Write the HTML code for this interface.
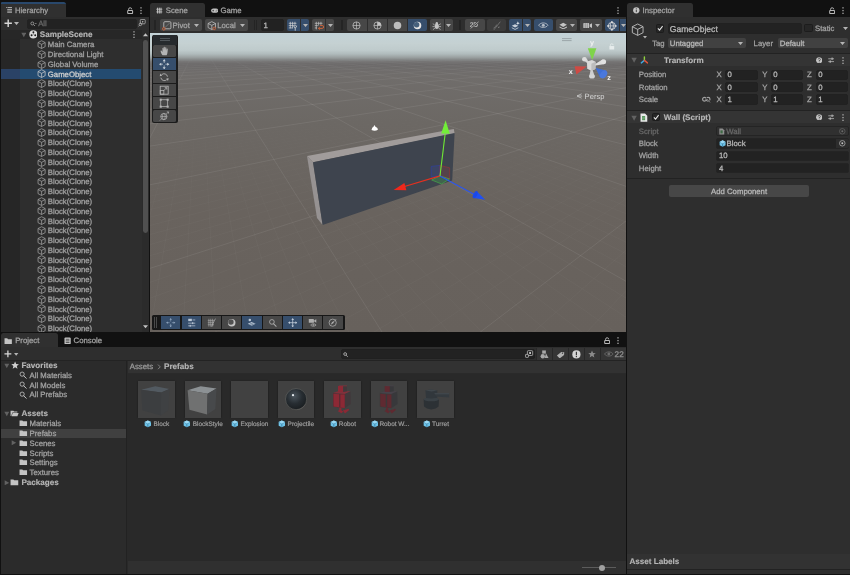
<!DOCTYPE html>
<html lang="en"><head><meta charset="utf-8"><title>Unity Editor</title>
<style>
html,body{margin:0;padding:0;background:#111111;}
body{width:850px;height:575px;overflow:hidden;position:relative;font-family:"Liberation Sans",sans-serif;}
#root{position:absolute;left:0;top:0;width:850px;height:575px;overflow:hidden;background:#111111;will-change:transform;transform:translateZ(0);-webkit-font-smoothing:antialiased;text-rendering:geometricPrecision;}
#root div,#root span,#root svg{position:absolute;box-sizing:border-box;}
#root span{white-space:nowrap;line-height:12px;height:12px;font-size:7.75px;color:#a2a2a2;-webkit-text-stroke:0.28px #a2a2a2;}
#root span.b{font-weight:bold;font-size:8.1px;color:#b6b6b6;-webkit-text-stroke:0.15px #b6b6b6;}
#root span.d{color:#686868;-webkit-text-stroke-color:#686868;}
#root span.s{font-size:6.45px;color:#9c9c9c;-webkit-text-stroke:0.2px #9c9c9c;}
#root span.f{color:#b8b8b8;-webkit-text-stroke-color:#b8b8b8;}
</style></head><body><div id="root">

<div style="left:1.00px;top:17.00px;width:148.00px;height:314.70px;background:#2e2e2e;"></div>
<div style="left:0.00px;top:2.00px;width:66.00px;height:15.20px;background:#303030;border-radius:2.5px 2.5px 0 0;border-top:2px solid #29486c;"></div>
<svg style="left:5.60px;top:6.60px;" width="6.80" height="6.40" viewBox="0 0 10 10"><g fill="#c4c4c4"><rect x="0" y="0.3" width="2" height="1.3"/><rect x="2.8" y="0.3" width="7" height="1.3"/><rect x="1.6" y="3" width="8.2" height="1.3"/><rect x="1.6" y="5.7" width="8.2" height="1.3"/><rect x="1.6" y="8.4" width="8.2" height="1.3"/></g></svg>
<span class="t" style="left:15.00px;top:5.05px;">Hierarchy</span>
<svg style="left:127.40px;top:6.60px;" width="6.20" height="7.00" viewBox="0 0 6.2 7"><rect x="0.7" y="3.4" width="4.9" height="3.1" rx="0.6" fill="none" stroke="#b8b8b8" stroke-width="1.05"/><path d="M1.6 3.3 V2.3 A1.55 1.55 0 0 1 4.7 2.3" fill="none" stroke="#b8b8b8" stroke-width="0.95"/></svg>
<svg style="left:139.60px;top:6.60px;" width="2.00" height="7.20" viewBox="0 0 2 7.2"><g fill="#c4c4c4"><rect x="0.45" y="0.2" width="1.1" height="1.3"/><rect x="0.45" y="2.95" width="1.1" height="1.3"/><rect x="0.45" y="5.7" width="1.1" height="1.3"/></g></svg>
<svg style="left:3.60px;top:19.20px;" width="8.40" height="8.40" viewBox="0 0 10 10"><path d="M5 0.6 V9.4 M0.6 5 H9.4" stroke="#d8d8d8" stroke-width="1.7"/></svg>
<svg style="left:14.20px;top:22.05px;" width="5.00" height="3.10" viewBox="0 0 10 6"><path d="M0 0 H10 L5 6 Z" fill="#b4b4b4"/></svg>
<div style="left:26.80px;top:18.60px;width:110.00px;height:10.00px;background:#222222;border-radius:2px;border:0.6px solid #222;"></div>
<svg style="left:29.60px;top:20.60px;" width="7.00" height="6.00" viewBox="0 0 9 7"><circle cx="3" cy="2.8" r="1.9" fill="none" stroke="#a0a0a0" stroke-width="1.1"/><path d="M4.4 4.2 L6.4 6" stroke="#a0a0a0" stroke-width="1.1"/><path d="M6.2 2.2 h2.6 l-1.3 1.4z" fill="#a0a0a0"/></svg>
<span class="d" style="left:38.20px;top:18.25px;">All</span>
<svg style="left:137.60px;top:19.40px;" width="8.00" height="8.00" viewBox="0 0 14 14"><rect x="4" y="0.8" width="8.6" height="7.6" rx="1.4" fill="none" stroke="#c4c4c4" stroke-width="1.2"/><path d="M7.2 3 V6.4 L10 4.7 Z" fill="#c4c4c4"/><circle cx="4.2" cy="9.4" r="2.2" fill="none" stroke="#c4c4c4" stroke-width="1.2"/><path d="M2.6 11 L0.8 13" stroke="#c4c4c4" stroke-width="1.3"/></svg>
<div style="left:1.00px;top:29.60px;width:18.60px;height:302.10px;background:#262626;"></div>
<div style="left:1.00px;top:29.60px;width:140.60px;height:9.20px;background:#272727;"></div>
<svg style="left:20.70px;top:32.30px;" width="5.60" height="5.60" viewBox="0 0 10 10"><path d="M0.6 1.2 H9.4 L5 9.2 Z" fill="#626262"/></svg>
<svg style="left:28.50px;top:30.40px;" width="8.80" height="8.80" viewBox="0 0 16 16"><circle cx="8" cy="8" r="7.4" fill="#dcdcdc"/><ellipse cx="8" cy="4.3" rx="1.7" ry="1.9" fill="#1e1e1e"/><circle cx="4.7" cy="9.6" r="1.75" fill="#1e1e1e"/><circle cx="11.3" cy="9.6" r="1.75" fill="#1e1e1e"/><path d="M8 7.6 V6.4 M8 7.6 L6.8 8.4 M8 7.6 L9.2 8.4" stroke="#555" stroke-width="0.8"/></svg>
<span class="b" style="left:39.80px;top:29.15px;">SampleScene</span>
<svg style="left:132.60px;top:31.00px;" width="2.00" height="7.20" viewBox="0 0 2 7.2"><g fill="#c4c4c4"><rect x="0.45" y="0.2" width="1.1" height="1.3"/><rect x="0.45" y="2.95" width="1.1" height="1.3"/><rect x="0.45" y="5.7" width="1.1" height="1.3"/></g></svg>
<div style="left:1px;top:39.2px;width:141px;height:292.5px;overflow:hidden;">
<svg style="left:35.9px;top:0.85px" width="9.2" height="9.2" viewBox="0 0 16 16"><g fill="none" stroke="#a8a8a8" stroke-width="1.25" stroke-linejoin="round"><path d="M8 1.3 L14.2 4.4 V11.6 L8 14.7 L1.8 11.6 V4.4 Z"/><path d="M1.8 4.4 L8 7.6 L14.2 4.4 M8 7.6 V14.7"/></g></svg>
<span class="t" style="left:46.8px;top:0.10px;color:#a2a2a2;-webkit-text-stroke-color:#a2a2a2">Main Camera</span>
<svg style="left:35.9px;top:10.64px" width="9.2" height="9.2" viewBox="0 0 16 16"><g fill="none" stroke="#a8a8a8" stroke-width="1.25" stroke-linejoin="round"><path d="M8 1.3 L14.2 4.4 V11.6 L8 14.7 L1.8 11.6 V4.4 Z"/><path d="M1.8 4.4 L8 7.6 L14.2 4.4 M8 7.6 V14.7"/></g></svg>
<span class="t" style="left:46.8px;top:9.89px;color:#a2a2a2;-webkit-text-stroke-color:#a2a2a2">Directional Light</span>
<svg style="left:35.9px;top:20.43px" width="9.2" height="9.2" viewBox="0 0 16 16"><g fill="none" stroke="#a8a8a8" stroke-width="1.25" stroke-linejoin="round"><path d="M8 1.3 L14.2 4.4 V11.6 L8 14.7 L1.8 11.6 V4.4 Z"/><path d="M1.8 4.4 L8 7.6 L14.2 4.4 M8 7.6 V14.7"/></g></svg>
<span class="t" style="left:46.8px;top:19.68px;color:#a2a2a2;-webkit-text-stroke-color:#a2a2a2">Global Volume</span>
<div style="left:0;top:29.92px;width:140.4px;height:9.8px;background:#244b70;"></div><div style="left:0;top:29.92px;width:18.6px;height:9.8px;background:#2a4266;"></div>
<svg style="left:35.9px;top:30.22px" width="9.2" height="9.2" viewBox="0 0 16 16"><g fill="none" stroke="#d0d0d0" stroke-width="1.25" stroke-linejoin="round"><path d="M8 1.3 L14.2 4.4 V11.6 L8 14.7 L1.8 11.6 V4.4 Z"/><path d="M1.8 4.4 L8 7.6 L14.2 4.4 M8 7.6 V14.7"/></g></svg>
<span class="t" style="left:46.8px;top:29.47px;color:#cfcfcf;-webkit-text-stroke-color:#cfcfcf">GameObject</span>
<svg style="left:35.9px;top:40.01px" width="9.2" height="9.2" viewBox="0 0 16 16"><g fill="none" stroke="#a8a8a8" stroke-width="1.25" stroke-linejoin="round"><path d="M8 1.3 L14.2 4.4 V11.6 L8 14.7 L1.8 11.6 V4.4 Z"/><path d="M1.8 4.4 L8 7.6 L14.2 4.4 M8 7.6 V14.7"/></g></svg>
<span class="t" style="left:46.8px;top:39.26px;color:#a2a2a2;-webkit-text-stroke-color:#a2a2a2">Block(Clone)</span>
<svg style="left:35.9px;top:49.80px" width="9.2" height="9.2" viewBox="0 0 16 16"><g fill="none" stroke="#a8a8a8" stroke-width="1.25" stroke-linejoin="round"><path d="M8 1.3 L14.2 4.4 V11.6 L8 14.7 L1.8 11.6 V4.4 Z"/><path d="M1.8 4.4 L8 7.6 L14.2 4.4 M8 7.6 V14.7"/></g></svg>
<span class="t" style="left:46.8px;top:49.05px;color:#a2a2a2;-webkit-text-stroke-color:#a2a2a2">Block(Clone)</span>
<svg style="left:35.9px;top:59.59px" width="9.2" height="9.2" viewBox="0 0 16 16"><g fill="none" stroke="#a8a8a8" stroke-width="1.25" stroke-linejoin="round"><path d="M8 1.3 L14.2 4.4 V11.6 L8 14.7 L1.8 11.6 V4.4 Z"/><path d="M1.8 4.4 L8 7.6 L14.2 4.4 M8 7.6 V14.7"/></g></svg>
<span class="t" style="left:46.8px;top:58.84px;color:#a2a2a2;-webkit-text-stroke-color:#a2a2a2">Block(Clone)</span>
<svg style="left:35.9px;top:69.38px" width="9.2" height="9.2" viewBox="0 0 16 16"><g fill="none" stroke="#a8a8a8" stroke-width="1.25" stroke-linejoin="round"><path d="M8 1.3 L14.2 4.4 V11.6 L8 14.7 L1.8 11.6 V4.4 Z"/><path d="M1.8 4.4 L8 7.6 L14.2 4.4 M8 7.6 V14.7"/></g></svg>
<span class="t" style="left:46.8px;top:68.63px;color:#a2a2a2;-webkit-text-stroke-color:#a2a2a2">Block(Clone)</span>
<svg style="left:35.9px;top:79.17px" width="9.2" height="9.2" viewBox="0 0 16 16"><g fill="none" stroke="#a8a8a8" stroke-width="1.25" stroke-linejoin="round"><path d="M8 1.3 L14.2 4.4 V11.6 L8 14.7 L1.8 11.6 V4.4 Z"/><path d="M1.8 4.4 L8 7.6 L14.2 4.4 M8 7.6 V14.7"/></g></svg>
<span class="t" style="left:46.8px;top:78.42px;color:#a2a2a2;-webkit-text-stroke-color:#a2a2a2">Block(Clone)</span>
<svg style="left:35.9px;top:88.96px" width="9.2" height="9.2" viewBox="0 0 16 16"><g fill="none" stroke="#a8a8a8" stroke-width="1.25" stroke-linejoin="round"><path d="M8 1.3 L14.2 4.4 V11.6 L8 14.7 L1.8 11.6 V4.4 Z"/><path d="M1.8 4.4 L8 7.6 L14.2 4.4 M8 7.6 V14.7"/></g></svg>
<span class="t" style="left:46.8px;top:88.21px;color:#a2a2a2;-webkit-text-stroke-color:#a2a2a2">Block(Clone)</span>
<svg style="left:35.9px;top:98.75px" width="9.2" height="9.2" viewBox="0 0 16 16"><g fill="none" stroke="#a8a8a8" stroke-width="1.25" stroke-linejoin="round"><path d="M8 1.3 L14.2 4.4 V11.6 L8 14.7 L1.8 11.6 V4.4 Z"/><path d="M1.8 4.4 L8 7.6 L14.2 4.4 M8 7.6 V14.7"/></g></svg>
<span class="t" style="left:46.8px;top:98.00px;color:#a2a2a2;-webkit-text-stroke-color:#a2a2a2">Block(Clone)</span>
<svg style="left:35.9px;top:108.54px" width="9.2" height="9.2" viewBox="0 0 16 16"><g fill="none" stroke="#a8a8a8" stroke-width="1.25" stroke-linejoin="round"><path d="M8 1.3 L14.2 4.4 V11.6 L8 14.7 L1.8 11.6 V4.4 Z"/><path d="M1.8 4.4 L8 7.6 L14.2 4.4 M8 7.6 V14.7"/></g></svg>
<span class="t" style="left:46.8px;top:107.79px;color:#a2a2a2;-webkit-text-stroke-color:#a2a2a2">Block(Clone)</span>
<svg style="left:35.9px;top:118.33px" width="9.2" height="9.2" viewBox="0 0 16 16"><g fill="none" stroke="#a8a8a8" stroke-width="1.25" stroke-linejoin="round"><path d="M8 1.3 L14.2 4.4 V11.6 L8 14.7 L1.8 11.6 V4.4 Z"/><path d="M1.8 4.4 L8 7.6 L14.2 4.4 M8 7.6 V14.7"/></g></svg>
<span class="t" style="left:46.8px;top:117.58px;color:#a2a2a2;-webkit-text-stroke-color:#a2a2a2">Block(Clone)</span>
<svg style="left:35.9px;top:128.12px" width="9.2" height="9.2" viewBox="0 0 16 16"><g fill="none" stroke="#a8a8a8" stroke-width="1.25" stroke-linejoin="round"><path d="M8 1.3 L14.2 4.4 V11.6 L8 14.7 L1.8 11.6 V4.4 Z"/><path d="M1.8 4.4 L8 7.6 L14.2 4.4 M8 7.6 V14.7"/></g></svg>
<span class="t" style="left:46.8px;top:127.37px;color:#a2a2a2;-webkit-text-stroke-color:#a2a2a2">Block(Clone)</span>
<svg style="left:35.9px;top:137.91px" width="9.2" height="9.2" viewBox="0 0 16 16"><g fill="none" stroke="#a8a8a8" stroke-width="1.25" stroke-linejoin="round"><path d="M8 1.3 L14.2 4.4 V11.6 L8 14.7 L1.8 11.6 V4.4 Z"/><path d="M1.8 4.4 L8 7.6 L14.2 4.4 M8 7.6 V14.7"/></g></svg>
<span class="t" style="left:46.8px;top:137.16px;color:#a2a2a2;-webkit-text-stroke-color:#a2a2a2">Block(Clone)</span>
<svg style="left:35.9px;top:147.70px" width="9.2" height="9.2" viewBox="0 0 16 16"><g fill="none" stroke="#a8a8a8" stroke-width="1.25" stroke-linejoin="round"><path d="M8 1.3 L14.2 4.4 V11.6 L8 14.7 L1.8 11.6 V4.4 Z"/><path d="M1.8 4.4 L8 7.6 L14.2 4.4 M8 7.6 V14.7"/></g></svg>
<span class="t" style="left:46.8px;top:146.95px;color:#a2a2a2;-webkit-text-stroke-color:#a2a2a2">Block(Clone)</span>
<svg style="left:35.9px;top:157.49px" width="9.2" height="9.2" viewBox="0 0 16 16"><g fill="none" stroke="#a8a8a8" stroke-width="1.25" stroke-linejoin="round"><path d="M8 1.3 L14.2 4.4 V11.6 L8 14.7 L1.8 11.6 V4.4 Z"/><path d="M1.8 4.4 L8 7.6 L14.2 4.4 M8 7.6 V14.7"/></g></svg>
<span class="t" style="left:46.8px;top:156.74px;color:#a2a2a2;-webkit-text-stroke-color:#a2a2a2">Block(Clone)</span>
<svg style="left:35.9px;top:167.28px" width="9.2" height="9.2" viewBox="0 0 16 16"><g fill="none" stroke="#a8a8a8" stroke-width="1.25" stroke-linejoin="round"><path d="M8 1.3 L14.2 4.4 V11.6 L8 14.7 L1.8 11.6 V4.4 Z"/><path d="M1.8 4.4 L8 7.6 L14.2 4.4 M8 7.6 V14.7"/></g></svg>
<span class="t" style="left:46.8px;top:166.53px;color:#a2a2a2;-webkit-text-stroke-color:#a2a2a2">Block(Clone)</span>
<svg style="left:35.9px;top:177.07px" width="9.2" height="9.2" viewBox="0 0 16 16"><g fill="none" stroke="#a8a8a8" stroke-width="1.25" stroke-linejoin="round"><path d="M8 1.3 L14.2 4.4 V11.6 L8 14.7 L1.8 11.6 V4.4 Z"/><path d="M1.8 4.4 L8 7.6 L14.2 4.4 M8 7.6 V14.7"/></g></svg>
<span class="t" style="left:46.8px;top:176.32px;color:#a2a2a2;-webkit-text-stroke-color:#a2a2a2">Block(Clone)</span>
<svg style="left:35.9px;top:186.86px" width="9.2" height="9.2" viewBox="0 0 16 16"><g fill="none" stroke="#a8a8a8" stroke-width="1.25" stroke-linejoin="round"><path d="M8 1.3 L14.2 4.4 V11.6 L8 14.7 L1.8 11.6 V4.4 Z"/><path d="M1.8 4.4 L8 7.6 L14.2 4.4 M8 7.6 V14.7"/></g></svg>
<span class="t" style="left:46.8px;top:186.11px;color:#a2a2a2;-webkit-text-stroke-color:#a2a2a2">Block(Clone)</span>
<svg style="left:35.9px;top:196.65px" width="9.2" height="9.2" viewBox="0 0 16 16"><g fill="none" stroke="#a8a8a8" stroke-width="1.25" stroke-linejoin="round"><path d="M8 1.3 L14.2 4.4 V11.6 L8 14.7 L1.8 11.6 V4.4 Z"/><path d="M1.8 4.4 L8 7.6 L14.2 4.4 M8 7.6 V14.7"/></g></svg>
<span class="t" style="left:46.8px;top:195.90px;color:#a2a2a2;-webkit-text-stroke-color:#a2a2a2">Block(Clone)</span>
<svg style="left:35.9px;top:206.44px" width="9.2" height="9.2" viewBox="0 0 16 16"><g fill="none" stroke="#a8a8a8" stroke-width="1.25" stroke-linejoin="round"><path d="M8 1.3 L14.2 4.4 V11.6 L8 14.7 L1.8 11.6 V4.4 Z"/><path d="M1.8 4.4 L8 7.6 L14.2 4.4 M8 7.6 V14.7"/></g></svg>
<span class="t" style="left:46.8px;top:205.69px;color:#a2a2a2;-webkit-text-stroke-color:#a2a2a2">Block(Clone)</span>
<svg style="left:35.9px;top:216.23px" width="9.2" height="9.2" viewBox="0 0 16 16"><g fill="none" stroke="#a8a8a8" stroke-width="1.25" stroke-linejoin="round"><path d="M8 1.3 L14.2 4.4 V11.6 L8 14.7 L1.8 11.6 V4.4 Z"/><path d="M1.8 4.4 L8 7.6 L14.2 4.4 M8 7.6 V14.7"/></g></svg>
<span class="t" style="left:46.8px;top:215.48px;color:#a2a2a2;-webkit-text-stroke-color:#a2a2a2">Block(Clone)</span>
<svg style="left:35.9px;top:226.02px" width="9.2" height="9.2" viewBox="0 0 16 16"><g fill="none" stroke="#a8a8a8" stroke-width="1.25" stroke-linejoin="round"><path d="M8 1.3 L14.2 4.4 V11.6 L8 14.7 L1.8 11.6 V4.4 Z"/><path d="M1.8 4.4 L8 7.6 L14.2 4.4 M8 7.6 V14.7"/></g></svg>
<span class="t" style="left:46.8px;top:225.27px;color:#a2a2a2;-webkit-text-stroke-color:#a2a2a2">Block(Clone)</span>
<svg style="left:35.9px;top:235.81px" width="9.2" height="9.2" viewBox="0 0 16 16"><g fill="none" stroke="#a8a8a8" stroke-width="1.25" stroke-linejoin="round"><path d="M8 1.3 L14.2 4.4 V11.6 L8 14.7 L1.8 11.6 V4.4 Z"/><path d="M1.8 4.4 L8 7.6 L14.2 4.4 M8 7.6 V14.7"/></g></svg>
<span class="t" style="left:46.8px;top:235.06px;color:#a2a2a2;-webkit-text-stroke-color:#a2a2a2">Block(Clone)</span>
<svg style="left:35.9px;top:245.60px" width="9.2" height="9.2" viewBox="0 0 16 16"><g fill="none" stroke="#a8a8a8" stroke-width="1.25" stroke-linejoin="round"><path d="M8 1.3 L14.2 4.4 V11.6 L8 14.7 L1.8 11.6 V4.4 Z"/><path d="M1.8 4.4 L8 7.6 L14.2 4.4 M8 7.6 V14.7"/></g></svg>
<span class="t" style="left:46.8px;top:244.85px;color:#a2a2a2;-webkit-text-stroke-color:#a2a2a2">Block(Clone)</span>
<svg style="left:35.9px;top:255.39px" width="9.2" height="9.2" viewBox="0 0 16 16"><g fill="none" stroke="#a8a8a8" stroke-width="1.25" stroke-linejoin="round"><path d="M8 1.3 L14.2 4.4 V11.6 L8 14.7 L1.8 11.6 V4.4 Z"/><path d="M1.8 4.4 L8 7.6 L14.2 4.4 M8 7.6 V14.7"/></g></svg>
<span class="t" style="left:46.8px;top:254.64px;color:#a2a2a2;-webkit-text-stroke-color:#a2a2a2">Block(Clone)</span>
<svg style="left:35.9px;top:265.18px" width="9.2" height="9.2" viewBox="0 0 16 16"><g fill="none" stroke="#a8a8a8" stroke-width="1.25" stroke-linejoin="round"><path d="M8 1.3 L14.2 4.4 V11.6 L8 14.7 L1.8 11.6 V4.4 Z"/><path d="M1.8 4.4 L8 7.6 L14.2 4.4 M8 7.6 V14.7"/></g></svg>
<span class="t" style="left:46.8px;top:264.43px;color:#a2a2a2;-webkit-text-stroke-color:#a2a2a2">Block(Clone)</span>
<svg style="left:35.9px;top:274.97px" width="9.2" height="9.2" viewBox="0 0 16 16"><g fill="none" stroke="#a8a8a8" stroke-width="1.25" stroke-linejoin="round"><path d="M8 1.3 L14.2 4.4 V11.6 L8 14.7 L1.8 11.6 V4.4 Z"/><path d="M1.8 4.4 L8 7.6 L14.2 4.4 M8 7.6 V14.7"/></g></svg>
<span class="t" style="left:46.8px;top:274.22px;color:#a2a2a2;-webkit-text-stroke-color:#a2a2a2">Block(Clone)</span>
<svg style="left:35.9px;top:284.76px" width="9.2" height="9.2" viewBox="0 0 16 16"><g fill="none" stroke="#a8a8a8" stroke-width="1.25" stroke-linejoin="round"><path d="M8 1.3 L14.2 4.4 V11.6 L8 14.7 L1.8 11.6 V4.4 Z"/><path d="M1.8 4.4 L8 7.6 L14.2 4.4 M8 7.6 V14.7"/></g></svg>
<span class="t" style="left:46.8px;top:284.01px;color:#a2a2a2;-webkit-text-stroke-color:#a2a2a2">Block(Clone)</span>
</div>
<div style="left:142.00px;top:29.60px;width:7.00px;height:302.10px;background:#2b2b2b;"></div>
<svg style="left:142.60px;top:33.40px;" width="5.00" height="3.40" viewBox="0 0 10 6"><path d="M0 6 H10 L5 0 Z" fill="#c4c4c4"/></svg>
<svg style="left:142.60px;top:325.20px;" width="5.00" height="3.40" viewBox="0 0 10 6"><path d="M0 0 H10 L5 6 Z" fill="#c4c4c4"/></svg>
<div style="left:143.40px;top:40.40px;width:4.80px;height:192.40px;background:#505050;border-radius:2.4px;"></div>
<div style="left:150.00px;top:17.00px;width:476.00px;height:15.60px;background:#2e2e2e;"></div>
<div style="left:150.00px;top:2.50px;width:54.60px;height:14.50px;background:#303030;border-radius:2.5px 2.5px 0 0;"></div>
<svg style="left:156.40px;top:6.60px;" width="6.60" height="7.20" viewBox="0 0 10 10"><path d="M0.4 3 H9.6 M0.4 7 H9.6" stroke="#c4c4c4" stroke-width="1.1"/><path d="M2.4 0.6 V9.4 M5 0.6 V9.4 M7.6 0.6 V9.4" stroke="#c4c4c4" stroke-width="1.5"/></svg>
<span class="t" style="left:165.80px;top:5.05px;">Scene</span>
<svg style="left:210.60px;top:7.80px;" width="7.40" height="5.20" viewBox="0 0 12 8"><rect x="0.2" y="0.4" width="11.6" height="7.2" rx="3.6" fill="#c4c4c4"/><path d="M2.2 4 H5 M3.6 2.6 V5.4" stroke="#222" stroke-width="0.9"/><circle cx="8.2" cy="4.6" r="0.8" fill="#222"/><circle cx="9.8" cy="3.2" r="0.8" fill="#222"/></svg>
<span class="t" style="left:220.40px;top:5.05px;">Game</span>
<svg style="left:617.00px;top:6.60px;" width="2.00" height="7.20" viewBox="0 0 2 7.2"><g fill="#c4c4c4"><rect x="0.45" y="0.2" width="1.1" height="1.3"/><rect x="0.45" y="2.95" width="1.1" height="1.3"/><rect x="0.45" y="5.7" width="1.1" height="1.3"/></g></svg>
<div style="left:153.60px;top:20.00px;width:0.70px;height:10.20px;background:#242424;"></div>
<div style="left:155.20px;top:20.00px;width:0.70px;height:10.20px;background:#242424;"></div>
<div style="left:160.00px;top:19.30px;width:41.80px;height:11.50px;background:#474747;border-radius:2px 2px 2px 2px;"></div>
<div style="left:204.50px;top:19.30px;width:43.50px;height:11.50px;background:#474747;border-radius:2px 2px 2px 2px;"></div>
<svg style="left:162.40px;top:21.00px;" width="9.60" height="9.60" viewBox="0 0 14 14"><rect x="2.6" y="1" width="10.4" height="10.4" rx="1.6" fill="none" stroke="#c4c4c4" stroke-width="1.2"/><path d="M4 10 L11.6 2.4" stroke="#8a8a8a" stroke-width="1"/><circle cx="2.6" cy="11.4" r="1.9" fill="#515151" stroke="#d9663a" stroke-width="1.2"/></svg>
<span class="t" style="left:172.60px;top:19.55px;">Pivot</span>
<svg style="left:194.00px;top:23.85px;" width="5.00" height="3.10" viewBox="0 0 10 6"><path d="M0 0 H10 L5 6 Z" fill="#b4b4b4"/></svg>
<svg style="left:206.60px;top:21.00px;" width="9.60" height="9.60" viewBox="0 0 14 14"><g fill="none" stroke="#c4c4c4" stroke-width="1.1" stroke-linejoin="round"><path d="M7 1 L12.4 3.6 V9.6 L7 12.4 L1.6 9.6 V3.6 Z"/><path d="M1.6 3.6 L7 6.4 L12.4 3.6 M7 6.4 V12.4"/></g><circle cx="10.6" cy="10.8" r="1.9" fill="#515151" stroke="#d9663a" stroke-width="1.2"/></svg>
<span class="t" style="left:217.20px;top:19.55px;">Local</span>
<svg style="left:240.40px;top:23.85px;" width="5.00" height="3.10" viewBox="0 0 10 6"><path d="M0 0 H10 L5 6 Z" fill="#b4b4b4"/></svg>
<div style="left:254.40px;top:20.00px;width:0.70px;height:10.20px;background:#242424;"></div>
<div style="left:256.00px;top:20.00px;width:0.70px;height:10.20px;background:#242424;"></div>
<div style="left:260.60px;top:19.30px;width:23.20px;height:11.50px;background:#222222;border-radius:2px;border:0.6px solid #212121;"></div>
<span class="f" style="left:263.40px;top:19.55px;">1</span>
<div style="left:286.80px;top:19.30px;width:13.20px;height:11.50px;background:#364e6c;border-radius:2px 0px 0px 2px;"></div>
<div style="left:300.70px;top:19.30px;width:8.50px;height:11.50px;background:#364e6c;border-radius:0px 2px 2px 0px;"></div>
<svg style="left:302.70px;top:23.85px;" width="5.00" height="3.10" viewBox="0 0 10 6"><path d="M0 0 H10 L5 6 Z" fill="#b4b4b4"/></svg>
<svg style="left:288.40px;top:20.80px;" width="10.00" height="10.00" viewBox="0 0 13 13"><path d="M3 1 V9.6 M6 1 V9.6 M9 1 V5 M1 3 H11 M1 6 H11 M1 9 H6" stroke="#d8d8d8" stroke-width="0.9" fill="none"/><path d="M7.6 6.6 L9.4 9.6 L11.4 6.4 M9.4 9.6 V12.6" stroke="#d8d8d8" stroke-width="1.1" fill="none"/></svg>
<div style="left:312.00px;top:19.30px;width:13.00px;height:11.50px;background:#474747;border-radius:2px 0px 0px 2px;"></div>
<div style="left:325.70px;top:19.30px;width:8.50px;height:11.50px;background:#474747;border-radius:0px 2px 2px 0px;"></div>
<svg style="left:327.70px;top:23.85px;" width="5.00" height="3.10" viewBox="0 0 10 6"><path d="M0 0 H10 L5 6 Z" fill="#b4b4b4"/></svg>
<svg style="left:313.60px;top:20.80px;" width="10.00" height="10.00" viewBox="0 0 13 13"><path d="M3 1 V11 M6 1 V6 M9 1 V5 M1 3 H11 M1 6 H5 M1 9 H4" stroke="#c4c4c4" stroke-width="0.9" fill="none"/><path d="M6 9.6 H10.6 A1.9 1.9 0 0 0 10.6 5.8 H8" stroke="#d9663a" stroke-width="1.2" fill="none"/><path d="M7.6 8 L5.6 9.6 L7.6 11.2" stroke="#d9663a" stroke-width="1.1" fill="none"/></svg>
<div style="left:340.60px;top:20.00px;width:0.70px;height:10.20px;background:#242424;"></div>
<div style="left:342.20px;top:20.00px;width:0.70px;height:10.20px;background:#242424;"></div>
<div style="left:347.00px;top:19.30px;width:19.90px;height:11.50px;background:#474747;border-radius:2px 0px 0px 2px;"></div>
<div style="left:367.60px;top:19.30px;width:19.40px;height:11.50px;background:#474747;border-radius:0px 0px 0px 0px;"></div>
<div style="left:387.80px;top:19.30px;width:19.60px;height:11.50px;background:#474747;border-radius:0px 0px 0px 0px;"></div>
<div style="left:408.20px;top:19.30px;width:19.30px;height:11.50px;background:#364e6c;border-radius:0px 2px 2px 0px;"></div>
<svg style="left:352.40px;top:21.00px;" width="9.00" height="9.00" viewBox="0 0 12 12"><circle cx="6" cy="6" r="4.8" fill="none" stroke="#c4c4c4" stroke-width="1"/><path d="M6 1.2 V10.8 M1.2 6 H10.8" stroke="#c4c4c4" stroke-width="0.9"/></svg>
<svg style="left:372.80px;top:21.00px;" width="9.00" height="9.00" viewBox="0 0 12 12"><circle cx="6" cy="6" r="4.8" fill="none" stroke="#c4c4c4" stroke-width="1"/><path d="M6 1.2 A4.8 4.8 0 0 1 10.8 6 H6 Z" fill="#c4c4c4"/><path d="M6 1.2 V10.8 M1.2 6 H10.8" stroke="#c4c4c4" stroke-width="0.9"/></svg>
<svg style="left:393.00px;top:21.00px;" width="9.00" height="9.00" viewBox="0 0 12 12"><circle cx="6" cy="6" r="5" fill="#bdbdbd"/></svg>
<svg style="left:413.40px;top:21.00px;" width="9.00" height="9.00" viewBox="0 0 12 12"><circle cx="6" cy="6" r="5" fill="#e6e6e6"/><circle cx="4.8" cy="5" r="3.7" fill="#46607c"/></svg>
<div style="left:429.60px;top:19.30px;width:14.20px;height:11.50px;background:#474747;border-radius:2px 0px 0px 2px;"></div>
<div style="left:444.50px;top:19.30px;width:8.00px;height:11.50px;background:#474747;border-radius:0px 2px 2px 0px;"></div>
<svg style="left:446.20px;top:23.85px;" width="5.00" height="3.10" viewBox="0 0 10 6"><path d="M0 0 H10 L5 6 Z" fill="#b4b4b4"/></svg>
<svg style="left:431.80px;top:20.80px;" width="9.60" height="9.60" viewBox="0 0 12 12"><ellipse cx="6" cy="6.6" rx="2.6" ry="3.4" fill="#c4c4c4"/><circle cx="6" cy="2.8" r="1.5" fill="#c4c4c4"/><path d="M3.4 5 L1 3.4 M3.2 7 H0.6 M3.6 9 L1.2 10.8 M8.6 5 L11 3.4 M8.8 7 H11.4 M8.4 9 L10.8 10.8" stroke="#c4c4c4" stroke-width="0.9"/></svg>
<div style="left:458.60px;top:20.00px;width:0.70px;height:10.20px;background:#242424;"></div>
<div style="left:460.20px;top:20.00px;width:0.70px;height:10.20px;background:#242424;"></div>
<div style="left:465.00px;top:19.30px;width:19.50px;height:11.50px;background:#474747;border-radius:2px 2px 2px 2px;"></div>
<div style="left:486.80px;top:19.30px;width:19.40px;height:11.50px;background:#3c3c3c;border-radius:2px;"></div>
<span class="t" style="left:469.8px;top:20.4px;font-size:6.8px;font-weight:bold;letter-spacing:-0.3px;color:#b4b4b4;-webkit-text-stroke:0;">2D</span>
<svg style="left:469.00px;top:20.40px;" width="12.00" height="9.60" viewBox="0 0 12 9.6"><path d="M1.6 8.4 L9.6 1.8" stroke="#474747" stroke-width="1.9"/><path d="M1.6 8.4 L9.6 1.8" stroke="#b4b4b4" stroke-width="0.8"/></svg>
<svg style="left:491.60px;top:21.00px;" width="10.00" height="9.40" viewBox="0 0 11 11"><path d="M1.4 8.4 L3.8 6.6 L5.2 4.2 M6.8 6.6 l1.4 1.6 m0 -1.6 l-1.4 1.6" stroke="#7a7a7a" stroke-width="0.9" fill="none"/><path d="M1.8 10.4 L9.4 0.8" stroke="#7a7a7a" stroke-width="0.9"/></svg>
<div style="left:509.20px;top:19.30px;width:13.30px;height:11.50px;background:#364e6c;border-radius:2px 0px 0px 2px;"></div>
<div style="left:523.20px;top:19.30px;width:8.20px;height:11.50px;background:#364e6c;border-radius:0px 2px 2px 0px;"></div>
<svg style="left:525.00px;top:23.85px;" width="5.00" height="3.10" viewBox="0 0 10 6"><path d="M0 0 H10 L5 6 Z" fill="#b4b4b4"/></svg>
<svg style="left:511.40px;top:20.80px;" width="9.40" height="9.40" viewBox="0 0 12 12"><path d="M1 6.2 L5.2 4 L9.4 6.2 L5.2 8.4 Z" fill="#c8d0da"/><path d="M1 8.6 L5.2 10.8 L9.4 8.6" fill="none" stroke="#c8d0da" stroke-width="1.1"/><path d="M8.8 0.4 L9.5 2.1 L11.2 2.8 L9.5 3.5 L8.8 5.2 L8.1 3.5 L6.4 2.8 L8.1 2.1 Z" fill="#e8edf2"/></svg>
<div style="left:533.80px;top:19.30px;width:19.40px;height:11.50px;background:#364e6c;border-radius:2px 2px 2px 2px;"></div>
<svg style="left:538.20px;top:22.40px;" width="10.60" height="6.40" viewBox="0 0 13 8"><path d="M0.6 4 C3.4 0.2 9.6 0.2 12.4 4 C9.6 7.8 3.4 7.8 0.6 4 Z" fill="none" stroke="#b4bcc6" stroke-width="1.1"/><circle cx="6.5" cy="4" r="1.9" fill="#b4bcc6"/></svg>
<div style="left:555.80px;top:19.30px;width:21.70px;height:11.50px;background:#474747;border-radius:2px 2px 2px 2px;"></div>
<svg style="left:558.60px;top:21.80px;" width="8.40" height="7.60" viewBox="0 0 10 9"><path d="M0.6 3.4 L5 1 L9.4 3.4 L5 5.8 Z" fill="#c4c4c4"/><path d="M0.6 5.8 L5 8.2 L9.4 5.8" fill="none" stroke="#c4c4c4" stroke-width="1.2"/></svg>
<svg style="left:570.00px;top:23.85px;" width="5.00" height="3.10" viewBox="0 0 10 6"><path d="M0 0 H10 L5 6 Z" fill="#b4b4b4"/></svg>
<div style="left:580.00px;top:19.30px;width:22.00px;height:11.50px;background:#474747;border-radius:2px 2px 2px 2px;"></div>
<svg style="left:582.80px;top:22.00px;" width="9.40" height="7.20" viewBox="0 0 12 8"><rect x="0.4" y="0.8" width="7.4" height="6.4" rx="0.8" fill="#c4c4c4"/><path d="M8.6 2.6 L11.6 0.8 V7.2 L8.6 5.4 Z" fill="#c4c4c4"/><path d="M2.8 0.8 V7.2 M5.4 0.8 V7.2" stroke="#515151" stroke-width="0.6"/></svg>
<svg style="left:594.60px;top:23.85px;" width="5.00" height="3.10" viewBox="0 0 10 6"><path d="M0 0 H10 L5 6 Z" fill="#b4b4b4"/></svg>
<div style="left:605.00px;top:19.30px;width:13.80px;height:11.50px;background:#364e6c;border-radius:2px 0px 0px 2px;"></div>
<div style="left:619.50px;top:19.30px;width:6.50px;height:11.50px;background:#364e6c;border-radius:0px 0px 0px 0px;"></div>
<svg style="left:620.60px;top:23.85px;" width="5.00" height="3.10" viewBox="0 0 10 6"><path d="M0 0 H10 L5 6 Z" fill="#b4b4b4"/></svg>
<svg style="left:607.00px;top:20.80px;" width="9.80" height="9.80" viewBox="0 0 12 12"><circle cx="6" cy="6" r="4.3" fill="none" stroke="#dcdcdc" stroke-width="1.1"/><ellipse cx="6" cy="6" rx="1.9" ry="4.3" fill="none" stroke="#dcdcdc" stroke-width="0.9"/><path d="M1.7 6 H10.3" stroke="#dcdcdc" stroke-width="0.9"/><circle cx="6" cy="1.2" r="1.1" fill="#dcdcdc"/><circle cx="6" cy="10.8" r="1.1" fill="#dcdcdc"/><circle cx="1.2" cy="6" r="1.1" fill="#dcdcdc"/><circle cx="10.8" cy="6" r="1.1" fill="#dcdcdc"/></svg>
<svg style="left:150.00px;top:32.60px;" width="476.00" height="299.10" viewBox="0 0 476 299.09999999999997"><defs><linearGradient id="sky" gradientUnits="userSpaceOnUse" x1="0" y1="0" x2="0" y2="299.1"><stop offset="0" stop-color="#c2d2d7"/><stop offset="0.034" stop-color="#c5d1d2"/><stop offset="0.057" stop-color="#bfcbcc"/><stop offset="0.070" stop-color="#b0bbbc"/><stop offset="0.082" stop-color="#999f9f"/><stop offset="0.089" stop-color="#858888"/><stop offset="0.096" stop-color="#747373"/><stop offset="0.104" stop-color="#6c6a6a"/><stop offset="0.14" stop-color="#706d6b"/><stop offset="0.30" stop-color="#6c6864"/><stop offset="0.6" stop-color="#69635e"/><stop offset="1" stop-color="#67615c"/></linearGradient><linearGradient id="gmf" gradientUnits="userSpaceOnUse" x1="0" y1="23.4" x2="0" y2="67.4"><stop offset="0" stop-color="#000"/><stop offset="0.25" stop-color="#888"/><stop offset="1" stop-color="#fff"/></linearGradient><mask id="gm" maskUnits="userSpaceOnUse" x="0" y="0" width="476.0" height="299.1"><rect x="0" y="0" width="476.0" height="299.1" fill="url(#gmf)"/></mask><linearGradient id="gnf" gradientUnits="userSpaceOnUse" x1="0" y1="62.4" x2="0" y2="197.4"><stop offset="0" stop-color="#000"/><stop offset="1" stop-color="#fff"/></linearGradient><mask id="gn" maskUnits="userSpaceOnUse" x="0" y="0" width="476.0" height="299.1"><rect x="0" y="0" width="476.0" height="299.1" fill="url(#gnf)"/></mask></defs><rect x="0" y="0" width="476" height="299.09999999999997" fill="url(#sky)"/><path mask="url(#gm)" stroke="#ffffff" stroke-opacity="0.095" stroke-width="0.8" fill="none" d="M-2.0 22.6L8.3 22.4M-2.0 23.2L30.9 22.4M-2.0 23.8L53.8 22.4M-2.0 24.5L76.9 22.4M462.8 22.4L478.0 22.9M-2.0 25.2L100.4 22.4M442.7 22.4L478.0 23.7M-2.0 26.0L124.0 22.4M422.7 22.4L478.0 24.6M-2.0 26.9L148.0 22.4M403.0 22.4L478.0 25.5M-2.0 27.9L172.2 22.4M383.4 22.4L478.0 26.5M-2.0 28.9L196.8 22.4M364.0 22.4L478.0 27.7M-2.0 30.1L221.6 22.4M344.8 22.4L478.0 29.0M-2.0 31.4L246.7 22.4M325.7 22.4L478.0 30.5M-2.0 32.9L272.1 22.4M306.8 22.4L478.0 32.1M-2.0 34.6L297.8 22.4M288.1 22.4L478.0 34.0M-2.0 36.6L323.9 22.4M269.5 22.4L478.0 36.3M-2.0 38.8L350.2 22.4M251.1 22.4L478.0 38.9M-2.0 41.4L376.9 22.4M232.9 22.4L478.0 42.0M-2.0 44.6L403.9 22.4M214.8 22.4L478.0 45.7M-2.0 48.3L431.2 22.4M196.9 22.4L478.0 50.3M-2.0 53.0L458.9 22.4M179.1 22.4L478.0 56.1M-2.0 58.8L478.0 23.1M161.4 22.4L478.0 63.8M-2.0 66.3L478.0 25.6M144.0 22.4L478.0 74.1M-2.0 76.5L478.0 29.0M126.6 22.4L478.0 89.1M-2.0 91.1L478.0 33.8M109.4 22.4L478.0 112.4M-2.0 113.4L478.0 41.2M92.4 22.4L478.0 154.0M-2.0 152.2L478.0 54.0M75.5 22.4L478.0 249.4M-2.0 236.0L478.0 81.8M58.7 22.4L233.3 301.1M327.6 301.1L478.0 186.5M-2.0 108.7L42.1 22.4M-2.0 39.2L25.6 22.4M-2.0 26.5L9.2 22.4"/><path mask="url(#gn)" stroke="#ffffff" stroke-opacity="0.042" stroke-width="0.7" fill="none" d="M-2.0 63.1L6.3 62.4M-2.0 63.9L15.8 62.4M-2.0 64.7L25.3 62.4M474.1 62.4L478.0 62.9M-2.0 65.5L34.9 62.4M461.0 62.4L478.0 64.7M-2.0 67.2L54.0 62.4M454.4 62.4L478.0 65.6M-2.0 68.1L63.6 62.4M447.9 62.4L478.0 66.5M-2.0 69.1L73.2 62.4M441.3 62.4L478.0 67.5M-2.0 70.0L82.8 62.4M434.8 62.4L478.0 68.5M-2.0 71.0L92.4 62.4M428.3 62.4L478.0 69.6M-2.0 72.1L102.0 62.4M421.7 62.4L478.0 70.7M-2.0 73.1L111.7 62.4M415.2 62.4L478.0 71.8M-2.0 74.2L121.3 62.4M408.7 62.4L478.0 72.9M-2.0 75.4L131.0 62.4M395.7 62.4L478.0 75.4M-2.0 77.8L150.4 62.4M389.2 62.4L478.0 76.7M-2.0 79.0L160.1 62.4M382.7 62.4L478.0 78.0M-2.0 80.3L169.8 62.4M376.2 62.4L478.0 79.4M-2.0 81.7L179.5 62.4M369.8 62.4L478.0 80.9M-2.0 83.1L189.3 62.4M363.3 62.4L478.0 82.4M-2.0 84.6L199.0 62.4M356.8 62.4L478.0 83.9M-2.0 86.1L208.8 62.4M350.4 62.4L478.0 85.6M-2.0 87.7L218.6 62.4M343.9 62.4L478.0 87.3M-2.0 89.4L228.4 62.4M331.0 62.4L478.0 90.9M-2.0 92.9L248.0 62.4M324.6 62.4L478.0 92.9M-2.0 94.8L257.8 62.4M318.1 62.4L478.0 94.9M-2.0 96.7L267.7 62.4M311.7 62.4L478.0 97.1M-2.0 98.8L277.5 62.4M305.3 62.4L478.0 99.3M-2.0 100.9L287.4 62.4M298.9 62.4L478.0 101.7M-2.0 103.2L297.3 62.4M292.4 62.4L478.0 104.1M-2.0 105.5L307.2 62.4M286.0 62.4L478.0 106.7M-2.0 108.0L317.1 62.4M279.6 62.4L478.0 109.5M-2.0 110.7L327.0 62.4M266.8 62.4L478.0 115.5M-2.0 116.3L346.9 62.4M260.5 62.4L478.0 118.7M-2.0 119.4L356.8 62.4M254.1 62.4L478.0 122.2M-2.0 122.7L366.8 62.4M247.7 62.4L478.0 125.9M-2.0 126.1L376.8 62.4M241.3 62.4L478.0 129.8M-2.0 129.8L386.8 62.4M235.0 62.4L478.0 134.0M-2.0 133.7L396.8 62.4M228.6 62.4L478.0 138.5M-2.0 137.8L406.8 62.4M222.2 62.4L478.0 143.3M-2.0 142.3L416.9 62.4M215.9 62.4L478.0 148.5M-2.0 147.1L426.9 62.4M203.2 62.4L478.0 160.1M-2.0 157.7L447.0 62.4M196.9 62.4L478.0 166.6M-2.0 163.6L457.1 62.4M190.5 62.4L478.0 173.8M-2.0 170.0L467.2 62.4M184.2 62.4L478.0 181.6M-2.0 177.0L477.3 62.4M177.9 62.4L478.0 190.1M-2.0 184.6L478.0 64.8M171.6 62.4L478.0 199.5M-2.0 193.0L478.0 67.5M165.3 62.4L478.0 210.0M-2.0 202.1L478.0 70.6M159.0 62.4L478.0 221.6M-2.0 212.2L478.0 73.9M152.7 62.4L478.0 234.7M-2.0 223.4L478.0 77.6M140.1 62.4L478.0 266.2M-2.0 250.0L478.0 86.4M133.8 62.4L478.0 285.5M-2.0 265.9L478.0 91.7M127.5 62.4L468.4 301.1M-2.0 284.1L478.0 97.7M121.3 62.4L434.7 301.1M7.3 301.1L478.0 104.6M115.0 62.4L401.1 301.1M60.5 301.1L478.0 112.7M108.7 62.4L367.5 301.1M113.8 301.1L478.0 122.2M102.5 62.4L333.9 301.1M167.1 301.1L478.0 133.6M96.2 62.4L300.3 301.1M220.5 301.1L478.0 147.4M90.0 62.4L266.8 301.1M274.0 301.1L478.0 164.6M77.5 62.4L199.8 301.1M381.2 301.1L478.0 215.6M71.3 62.4L166.3 301.1M434.9 301.1L478.0 255.7M65.1 62.4L132.9 301.1M58.8 62.4L99.5 301.1M52.6 62.4L66.1 301.1M32.8 301.1L46.4 62.4M-0.5 301.1L40.2 62.4M-2.0 189.1L34.0 62.4M-2.0 137.4L27.8 62.4M-2.0 90.4L15.5 62.4M-2.0 77.7L9.3 62.4M-2.0 68.4L3.1 62.4"/><polygon points="157.0,123.1 303.8,96.1 304.6,100.4 163.0,129.2" fill="#a19c9b"/><polygon points="157.0,123.1 163.0,129.2 172.6,192.0 167.0,185.0" fill="#969292"/><polygon points="163.0,129.2 304.6,100.0 302.2,147.4 172.6,192.0" fill="#3e444e"/><path d="M221.5 97.0 q0.4 -2.6 2.2 -3.4 l0.6 -1.6 l1.2 1.8 q2.6 0.8 2.4 3 q-3 1.6 -6.4 0.2z" fill="#ffffff"/><polygon points="281.2,133.4 290.0,132.4 290.0,142.9 281.2,143.8" fill="#2f4de0" fill-opacity="0.14" stroke="#2a3fc0" stroke-opacity="0.8" stroke-width="0.6"/><polygon points="290.0,132.4 299.6,134.8 299.6,146.0 290.0,142.9" fill="#e03a3a" fill-opacity="0.14" stroke="#b03030" stroke-opacity="0.8" stroke-width="0.6"/><polygon points="290.0,142.9 299.6,146.0 291.6,151.0 281.6,147.0" fill="#4be04b" fill-opacity="0.2" stroke="#48c848" stroke-opacity="0.85" stroke-width="0.6"/><path d="M290.0 142.9 L254.5 153.6" stroke="#e5301f" stroke-width="1.1"/><polygon points="243.6,157.0 254.4,150.0 256.4,157.2" fill="#f0281c"/><path d="M290.0 142.9 L324.0 161.2" stroke="#2a55ee" stroke-width="1.1"/><polygon points="335.2,166.8 323.6,165.0 326.8,158.2" fill="#1f50f2"/><ellipse cx="325.2" cy="161.6" rx="3.9" ry="1.9" transform="rotate(-62 325.2 161.6)" fill="#1a48ea"/><path d="M290.0 142.9 L295.2 100.4" stroke="#6fe636" stroke-width="1.1"/><polygon points="295.6,87.2 291.2,100.6 299.8,100.8" fill="#72ee38"/><path d="M412.0 5.6 h9.6 M412.0 7.6 h9.6" stroke="#8a9496" stroke-width="0.7"/><polygon points="441.4,33.4 434.6,28.0 432.4,25.4 434.8,24.0 437.0,26.2" fill="#d6d6d6"/><polygon points="442.0,33.0 452.4,26.4 455.0,28.8 453.6,31.2" fill="#dedede"/><polygon points="441.4,33.4 439.2,43.4 442.0,45.0 444.8,43.4" fill="#cfcfcf"/><circle cx="434.4" cy="26.2" r="2.3" fill="#dcdcdc"/><circle cx="453.6" cy="28.8" r="2.5" fill="#e2e2e2"/><ellipse cx="442.0" cy="43.4" rx="2.8" ry="2.2" fill="#d4d4d4"/><polygon points="437.8,15.2 446.4,15.2 442.2,27.0" fill="#7fd44a"/><polygon points="424.6,33.2 436.8,33.6 426.4,41.4" fill="#cf4a44"/><polygon points="445.4,34.8 456.6,37.8 450.4,45.0" fill="#3f6fd6"/><ellipse cx="453.6" cy="41.4" rx="4.3" ry="3.1" transform="rotate(-50 453.6 41.4)" fill="#4a78dc"/><polygon points="437.0,28.4 442.0,27.0 445.6,28.8 445.4,36.0 441.4,37.8 437.2,35.8" fill="#d9d9d9"/><polygon points="441.4,30.8 445.6,28.8 445.4,36.0 441.4,37.8" fill="#bdbdbd"/><text x="442.0" y="12.0" font-size="7.2" font-weight="bold" fill="#f2f2f2" text-anchor="middle" font-family="Liberation Sans, sans-serif">y</text><text x="420.8" y="40.6" font-size="7.2" font-weight="bold" fill="#f2f2f2" text-anchor="middle" font-family="Liberation Sans, sans-serif">x</text><text x="459.0" y="47.0" font-size="7.2" font-weight="bold" fill="#f2f2f2" text-anchor="middle" font-family="Liberation Sans, sans-serif">z</text><g transform="translate(459.4 10.4)"><rect x="0" y="2.6" width="4.8" height="3.4" rx="0.5" fill="#e6ecec"/><path d="M1 2.8 V1.8 A1.4 1.4 0 0 1 3.8 1.8" fill="none" stroke="#e6ecec" stroke-width="0.8"/></g><path d="M431.6 60.8 L427.0 63.0 L431.6 65.2 M427.0 63.0 h5" stroke="#d2d2d2" stroke-width="0.7" fill="none"/><text x="434.6" y="65.6" font-size="7.6" fill="#d8d8d8" font-family="Liberation Sans, sans-serif">Persp</text></svg>
<div style="left:151.80px;top:34.60px;width:25.80px;height:88.80px;background:#1c1c1c;border-radius:2px;"></div>
<div style="left:152.80px;top:35.40px;width:23.80px;height:9.40px;background:#262a2d;"></div>
<div style="left:159.80px;top:37.50px;width:10.00px;height:0.70px;background:#50565a;"></div>
<div style="left:159.80px;top:39.80px;width:10.00px;height:0.70px;background:#50565a;"></div>
<div style="left:153.00px;top:45.30px;width:23.40px;height:11.60px;background:#474747;border-radius:1.5px;"></div>
<div style="left:153.00px;top:57.60px;width:23.40px;height:12.20px;background:#364e6c;"></div>
<div style="left:153.00px;top:70.60px;width:23.40px;height:12.20px;background:#474747;"></div>
<div style="left:153.00px;top:83.60px;width:23.40px;height:12.20px;background:#474747;"></div>
<div style="left:153.00px;top:96.60px;width:23.40px;height:12.20px;background:#474747;"></div>
<div style="left:153.00px;top:109.60px;width:23.40px;height:12.20px;background:#474747;border-radius:1.5px;"></div>
<svg style="left:159.20px;top:46.40px;" width="10.60" height="9.60" viewBox="0 0 11 12"><path d="M3.2 11.6 C1.6 9.4 1 7.6 0.8 6 L2 5.6 L3.2 7.6 V2.4 L4.4 2.2 L4.8 5.4 V1.2 L6 1 L6.4 5.4 L6.8 1.6 L8 1.8 V5.8 L8.6 3 L9.8 3.4 C9.8 6.6 9.6 9.4 8.4 11.6 Z" fill="#b4b4b4"/></svg>
<svg style="left:159.40px;top:58.60px;" width="10.40" height="10.40" viewBox="0 0 12 12"><path d="M6 1 V4.6 M6 7.4 V11 M1 6 H4.6 M7.4 6 H11" stroke="#c6cfd8" stroke-width="0.8"/><path d="M6 0 L7.7 2.6 H4.3 Z M6 12 L7.7 9.4 H4.3 Z M0 6 L2.6 4.3 V7.7 Z M12 6 L9.4 4.3 V7.7 Z" fill="#c6cfd8"/></svg>
<svg style="left:159.40px;top:71.60px;" width="10.40" height="10.40" viewBox="0 0 12 12"><path d="M9.8 5.4 A4 4 0 0 0 3 3.2 M2.2 6.6 A4 4 0 0 0 9 8.8" fill="none" stroke="#b4b4b4" stroke-width="1"/><path d="M1.6 1.6 L3.6 4.4 L0.8 4.8 Z M10.4 10.4 L8.4 7.6 L11.2 7.2 Z" fill="#b4b4b4"/></svg>
<svg style="left:159.40px;top:84.60px;" width="10.40" height="10.40" viewBox="0 0 12 12"><rect x="1.4" y="1.4" width="9.2" height="9.2" fill="none" stroke="#b4b4b4" stroke-width="1"/><rect x="1.4" y="6.4" width="4.2" height="4.2" fill="none" stroke="#b4b4b4" stroke-width="0.9"/><path d="M5.4 6.6 L8.8 3.2 M6.6 3 H9 V5.4" fill="none" stroke="#b4b4b4" stroke-width="0.9"/></svg>
<svg style="left:159.40px;top:97.60px;" width="10.40" height="10.40" viewBox="0 0 12 12"><rect x="2" y="2" width="8" height="8" fill="none" stroke="#b4b4b4" stroke-width="0.9"/><g fill="#b4b4b4"><rect x="0.8" y="0.8" width="2.4" height="2.4"/><rect x="8.8" y="0.8" width="2.4" height="2.4"/><rect x="0.8" y="8.8" width="2.4" height="2.4"/><rect x="8.8" y="8.8" width="2.4" height="2.4"/></g></svg>
<svg style="left:159.40px;top:110.60px;" width="10.40" height="10.40" viewBox="0 0 12 12"><circle cx="5.6" cy="6.4" r="3.6" fill="none" stroke="#b4b4b4" stroke-width="0.9"/><ellipse cx="5.6" cy="6.4" rx="1.6" ry="3.6" fill="none" stroke="#b4b4b4" stroke-width="0.7"/><path d="M2 6.4 H9.2 M1 11 L3 9 M8.4 3.6 L11 1 M9 1 H11 V3" fill="none" stroke="#b4b4b4" stroke-width="0.8"/></svg>
<div style="left:152.40px;top:314.70px;width:192.60px;height:15.00px;background:#171717;border-radius:1.5px;"></div>
<div style="left:154.40px;top:317.20px;width:0.70px;height:10.40px;background:#4a4a4a;"></div>
<div style="left:156.00px;top:317.20px;width:0.70px;height:10.40px;background:#4a4a4a;"></div>
<div style="left:161.20px;top:316.20px;width:19.20px;height:12.50px;background:#364e6c;"></div>
<div style="left:181.60px;top:316.20px;width:19.20px;height:12.50px;background:#364e6c;"></div>
<div style="left:201.90px;top:316.20px;width:19.20px;height:12.50px;background:#474747;"></div>
<div style="left:222.20px;top:316.20px;width:19.20px;height:12.50px;background:#474747;"></div>
<div style="left:242.40px;top:316.20px;width:19.20px;height:12.50px;background:#364e6c;"></div>
<div style="left:262.60px;top:316.20px;width:19.20px;height:12.50px;background:#474747;"></div>
<div style="left:282.80px;top:316.20px;width:19.20px;height:12.50px;background:#364e6c;"></div>
<div style="left:303.10px;top:316.20px;width:19.20px;height:12.50px;background:#474747;"></div>
<div style="left:323.40px;top:316.20px;width:19.20px;height:12.50px;background:#474747;"></div>
<svg style="left:166.15px;top:317.80px;" width="9.40" height="9.40" viewBox="0 0 12 12"><path d="M6 1.4 V4.6 M6 7.4 V10.6 M1.4 6 H4.6 M7.4 6 H10.6" stroke="#93a8c0" stroke-width="0.8"/><path d="M6 0 L7.5 2.3 H4.5 Z M6 12 L7.5 9.7 H4.5 Z M0 6 L2.3 4.5 V7.5 Z M12 6 L9.7 4.5 V7.5 Z" fill="#93a8c0"/></svg>
<svg style="left:186.55px;top:317.80px;" width="9.40" height="9.40" viewBox="0 0 12 12"><rect x="1.6" y="1" width="4.6" height="3" fill="#bcc8d6"/><path d="M7 2.5 H10.6 M1.4 6.6 H10.6 M1.4 10 H10.6" stroke="#bcc8d6" stroke-width="0.9"/><rect x="6.6" y="5.4" width="1.4" height="2.4" fill="#bcc8d6"/><rect x="3.4" y="8.8" width="1.4" height="2.4" fill="#bcc8d6"/></svg>
<svg style="left:206.85px;top:317.80px;" width="9.40" height="9.40" viewBox="0 0 12 12"><path d="M2.4 1 V11 M4.8 1 V11 M7.2 1 V11 M1 3.4 H9 M1 6 H9 M1 8.6 H9" stroke="#aeaeae" stroke-width="0.8"/><path d="M10.8 0.8 L5.4 11.2" stroke="#aeaeae" stroke-width="0.9"/></svg>
<svg style="left:227.15px;top:317.80px;" width="9.40" height="9.40" viewBox="0 0 12 12"><circle cx="6" cy="6" r="4.8" fill="#c4c4c4"/><circle cx="5" cy="5" r="3.5" fill="#515151"/></svg>
<svg style="left:247.35px;top:317.80px;" width="9.40" height="9.40" viewBox="0 0 12 12"><circle cx="3.6" cy="2.6" r="1.6" fill="#bcc8d6"/><path d="M1 7.4 L6 5 L11 7.4 L6 9.8 Z" fill="#bcc8d6"/><path d="M3 8.6 L8 6.2 M5 9.4 L10 7 M3.4 6.4 L8.4 8.8" stroke="#46607c" stroke-width="0.5"/></svg>
<svg style="left:267.55px;top:317.80px;" width="9.40" height="9.40" viewBox="0 0 12 12"><circle cx="5" cy="5" r="3" fill="none" stroke="#aeaeae" stroke-width="1.1"/><path d="M7.2 7.4 L10.4 10.6" stroke="#aeaeae" stroke-width="1.3" stroke-linecap="round"/></svg>
<svg style="left:287.75px;top:317.80px;" width="9.40" height="9.40" viewBox="0 0 12 12"><path d="M6 1.4 V10.6 M1.4 6 H10.6" stroke="#c2ccd8" stroke-width="1"/><path d="M6 0 L7.7 2.5 H4.3 Z M6 12 L7.7 9.5 H4.3 Z M0 6 L2.5 4.3 V7.7 Z M12 6 L9.5 4.3 V7.7 Z" fill="#c2ccd8"/></svg>
<svg style="left:308.05px;top:317.80px;" width="9.40" height="9.40" viewBox="0 0 12 12"><rect x="1" y="1.4" width="6.6" height="4.8" rx="0.6" fill="#aeaeae"/><path d="M8 3 L10.6 1.6 V6 L8 4.6 Z" fill="#aeaeae"/><path d="M3.4 9 C5 6.8 8.6 6.8 10.4 9 C8.6 11.2 5 11.2 3.4 9 Z" fill="#515151" stroke="#aeaeae" stroke-width="0.9"/><circle cx="6.9" cy="9" r="1" fill="#aeaeae"/></svg>
<svg style="left:328.35px;top:317.80px;" width="9.40" height="9.40" viewBox="0 0 12 12"><circle cx="6" cy="6" r="4.6" fill="none" stroke="#aeaeae" stroke-width="1"/><path d="M8.6 3.4 L6.8 6.8 L3.4 8.6 L5.2 5.2 Z" fill="#aeaeae"/><path d="M10.4 1.6 L8.4 3.6" stroke="#aeaeae" stroke-width="1"/></svg>
<div style="left:1.00px;top:347.30px;width:625.00px;height:226.40px;background:#292929;"></div>
<div style="left:1.00px;top:333.40px;width:56.60px;height:14.00px;background:#303030;border-radius:2.5px 2.5px 0 0;"></div>
<svg style="left:4.40px;top:337.00px;" width="8.40" height="8.40" viewBox="0 0 16 16"><path d="M1 2.6 H6.2 L7.6 4.2 H15 V13.2 H1 Z" fill="#c4c4c4"/></svg>
<span class="t" style="left:15.20px;top:335.45px;">Project</span>
<svg style="left:64.20px;top:336.60px;" width="7.20" height="7.80" viewBox="0 0 10 11"><rect x="0.6" y="0.6" width="8.8" height="9.8" rx="1.6" fill="#c4c4c4"/><path d="M2.4 3.2 H7.6 M2.4 5.5 H7.6 M2.4 7.8 H7.6" stroke="#1c1c1c" stroke-width="0.9"/></svg>
<span class="t" style="left:73.60px;top:335.45px;">Console</span>
<svg style="left:604.00px;top:337.00px;" width="6.20" height="7.00" viewBox="0 0 6.2 7"><rect x="0.7" y="3.4" width="4.9" height="3.1" rx="0.6" fill="none" stroke="#b8b8b8" stroke-width="1.05"/><path d="M1.6 3.3 V2.3 A1.55 1.55 0 0 1 4.7 2.3" fill="none" stroke="#b8b8b8" stroke-width="0.95"/></svg>
<svg style="left:617.20px;top:336.80px;" width="2.00" height="7.20" viewBox="0 0 2 7.2"><g fill="#c4c4c4"><rect x="0.45" y="0.2" width="1.1" height="1.3"/><rect x="0.45" y="2.95" width="1.1" height="1.3"/><rect x="0.45" y="5.7" width="1.1" height="1.3"/></g></svg>
<div style="left:1.00px;top:347.30px;width:625.00px;height:13.20px;background:#2e2e2e;"></div>
<div style="left:1.00px;top:360.30px;width:625.00px;height:0.80px;background:#232323;"></div>
<svg style="left:3.80px;top:350.20px;" width="7.80" height="7.80" viewBox="0 0 10 10"><path d="M5 0.6 V9.4 M0.6 5 H9.4" stroke="#d8d8d8" stroke-width="1.6"/></svg>
<svg style="left:14.20px;top:353.00px;" width="4.40" height="2.80" viewBox="0 0 10 6"><path d="M0 0 H10 L5 6 Z" fill="#b4b4b4"/></svg>
<div style="left:340.60px;top:349.40px;width:194.00px;height:9.60px;background:#222222;border-radius:2px;border:0.6px solid #202020;"></div>
<svg style="left:343.40px;top:351.60px;" width="5.00" height="5.40" viewBox="0 0 8 9"><circle cx="3.4" cy="3.4" r="2.3" fill="none" stroke="#c4c4c4" stroke-width="1.3"/><path d="M5.2 5.4 L7.6 8" stroke="#c4c4c4" stroke-width="1.4"/></svg>
<svg style="left:525.20px;top:350.20px;" width="8.40" height="8.20" viewBox="0 0 14 13"><rect x="4" y="0.8" width="8.8" height="8" rx="1.4" fill="none" stroke="#c4c4c4" stroke-width="1.2"/><rect x="7" y="3" width="3" height="3.4" fill="#c4c4c4"/><rect x="0.8" y="7" width="5" height="5" rx="1" fill="#2a2a2a" stroke="#c4c4c4" stroke-width="1.2"/></svg>
<div style="left:536.80px;top:347.60px;width:89.20px;height:12.60px;background:#353535;"></div>
<div style="left:536.40px;top:347.60px;width:0.80px;height:12.60px;background:#282828;"></div>
<div style="left:552.20px;top:347.60px;width:0.80px;height:12.60px;background:#282828;"></div>
<div style="left:568.20px;top:347.60px;width:0.80px;height:12.60px;background:#282828;"></div>
<div style="left:584.10px;top:347.60px;width:0.80px;height:12.60px;background:#282828;"></div>
<div style="left:600.00px;top:347.60px;width:0.80px;height:12.60px;background:#282828;"></div>
<svg style="left:540.20px;top:350.00px;" width="8.80" height="8.80" viewBox="0 0 12 12"><rect x="3" y="0.6" width="5" height="4.4" fill="#a8a8a8"/><circle cx="3.8" cy="8.6" r="3" fill="#a8a8a8"/><path d="M8.2 4.4 L11.6 10.8 H6.4 Z" fill="#a8a8a8"/></svg>
<svg style="left:555.60px;top:350.60px;" width="9.00" height="7.80" viewBox="0 0 12 11"><path d="M1 7 L6.4 1.4 L10.6 1 L11 5 L5.4 10.6 Z" fill="#b0b0b0" transform="rotate(8 6 6)"/><circle cx="8.8" cy="3" r="0.9" fill="#353535"/></svg>
<svg style="left:572.00px;top:350.00px;" width="8.80" height="8.80" viewBox="0 0 12 12"><circle cx="6" cy="6" r="5.6" fill="#d6d6d6"/><rect x="5.2" y="2.4" width="1.6" height="4.8" fill="#383838"/><rect x="5.2" y="8.2" width="1.6" height="1.6" fill="#383838"/></svg>
<svg style="left:588.20px;top:350.40px;" width="8.00" height="8.00" viewBox="0 0 12 12"><path d="M6 0.6 L7.6 4.4 L11.6 4.7 L8.5 7.3 L9.5 11.3 L6 9.1 L2.5 11.3 L3.5 7.3 L0.4 4.7 L4.4 4.4 Z" fill="#8a8a8a"/></svg>
<svg style="left:604.20px;top:351.40px;" width="9.60" height="6.00" viewBox="0 0 13 8"><path d="M0.6 4 C3.4 0.2 9.6 0.2 12.4 4 C9.6 7.8 3.4 7.8 0.6 4 Z" fill="none" stroke="#6e6e6e" stroke-width="1.1"/><circle cx="6.5" cy="4" r="1.9" fill="#6e6e6e"/></svg>
<span class="t" style="left:614.60px;top:349.05px;font-size:8.2px;color:#909090;-webkit-text-stroke-color:#909090;">22</span>
<div style="left:1.00px;top:361.10px;width:125.40px;height:212.50px;background:#2b2b2b;"></div>
<div style="left:126.40px;top:361.10px;width:1.10px;height:212.50px;background:#222;"></div>
<div style="left:127.50px;top:361.10px;width:498.50px;height:12.30px;background:#323232;"></div>
<div style="left:127.50px;top:373.20px;width:498.50px;height:0.70px;background:#2a2a2a;"></div>
<span class="t" style="left:129.80px;top:361.45px;color:#9a9a9a;-webkit-text-stroke-color:#9a9a9a;">Assets</span>
<svg style="left:156.60px;top:364.00px;" width="4.40" height="5.80" viewBox="0 0 7 10"><path d="M1.4 1 L5.4 5 L1.4 9" fill="none" stroke="#9c9c9c" stroke-width="1.3"/></svg>
<span class="b" style="left:164.00px;top:361.45px;">Prefabs</span>
<svg style="left:4.40px;top:362.80px;" width="5.60" height="5.60" viewBox="0 0 10 10"><path d="M0.6 1.2 H9.4 L5 9.2 Z" fill="#626262"/></svg>
<svg style="left:10.80px;top:361.40px;" width="8.20" height="8.20" viewBox="0 0 12 12"><path d="M6 0.6 L7.6 4.4 L11.6 4.7 L8.5 7.3 L9.5 11.3 L6 9.1 L2.5 11.3 L3.5 7.3 L0.4 4.7 L4.4 4.4 Z" fill="#d0d0d0"/></svg>
<span class="b" style="left:21.40px;top:360.15px;">Favorites</span>
<svg style="left:19.40px;top:371.45px;" width="8.00" height="8.00" viewBox="0 0 16 16"><circle cx="6.3" cy="6.3" r="4.2" fill="none" stroke="#c4c4c4" stroke-width="1.6"/><path d="M9.4 9.6 L14.4 14.6" stroke="#c4c4c4" stroke-width="2" stroke-linecap="round"/></svg>
<span class="t" style="left:29.60px;top:369.90px;">All Materials</span>
<svg style="left:19.40px;top:381.24px;" width="8.00" height="8.00" viewBox="0 0 16 16"><circle cx="6.3" cy="6.3" r="4.2" fill="none" stroke="#c4c4c4" stroke-width="1.6"/><path d="M9.4 9.6 L14.4 14.6" stroke="#c4c4c4" stroke-width="2" stroke-linecap="round"/></svg>
<span class="t" style="left:29.60px;top:379.69px;">All Models</span>
<svg style="left:19.40px;top:391.03px;" width="8.00" height="8.00" viewBox="0 0 16 16"><circle cx="6.3" cy="6.3" r="4.2" fill="none" stroke="#c4c4c4" stroke-width="1.6"/><path d="M9.4 9.6 L14.4 14.6" stroke="#c4c4c4" stroke-width="2" stroke-linecap="round"/></svg>
<span class="t" style="left:29.60px;top:389.48px;">All Prefabs</span>
<svg style="left:4.40px;top:411.10px;" width="5.60" height="5.60" viewBox="0 0 10 10"><path d="M0.6 1.2 H9.4 L5 9.2 Z" fill="#626262"/></svg>
<svg style="left:10.40px;top:409.40px;" width="9.00" height="9.00" viewBox="0 0 16 16"><path d="M1 3 H6 L7.5 4.5 H13 V6 H4.2 L2.2 12.6 H1 Z M4.8 7 H15.4 L13.2 13 H2.8 Z" fill="#c4c4c4"/></svg>
<span class="b" style="left:21.40px;top:408.45px;">Assets</span>
<div style="left:1.00px;top:428.50px;width:125.40px;height:9.80px;background:#404040;"></div>
<svg style="left:19.00px;top:419.30px;" width="8.60" height="8.60" viewBox="0 0 16 16"><path d="M1 2.6 H6.2 L7.6 4.2 H15 V13.2 H1 Z" fill="#c4c4c4"/></svg>
<span class="t" style="left:29.60px;top:418.25px;">Materials</span>
<svg style="left:19.00px;top:429.09px;" width="8.60" height="8.60" viewBox="0 0 16 16"><path d="M1 2.6 H6.2 L7.6 4.2 H15 V13.2 H1 Z" fill="#c4c4c4"/></svg>
<span class="t" style="left:29.60px;top:428.04px;">Prefabs</span>
<svg style="left:19.00px;top:438.88px;" width="8.60" height="8.60" viewBox="0 0 16 16"><path d="M1 2.6 H6.2 L7.6 4.2 H15 V13.2 H1 Z" fill="#c4c4c4"/></svg>
<span class="t" style="left:29.60px;top:437.83px;">Scenes</span>
<svg style="left:19.00px;top:448.67px;" width="8.60" height="8.60" viewBox="0 0 16 16"><path d="M1 2.6 H6.2 L7.6 4.2 H15 V13.2 H1 Z" fill="#c4c4c4"/></svg>
<span class="t" style="left:29.60px;top:447.62px;">Scripts</span>
<svg style="left:19.00px;top:458.46px;" width="8.60" height="8.60" viewBox="0 0 16 16"><path d="M1 2.6 H6.2 L7.6 4.2 H15 V13.2 H1 Z" fill="#c4c4c4"/></svg>
<span class="t" style="left:29.60px;top:457.41px;">Settings</span>
<svg style="left:19.00px;top:468.25px;" width="8.60" height="8.60" viewBox="0 0 16 16"><path d="M1 2.6 H6.2 L7.6 4.2 H15 V13.2 H1 Z" fill="#c4c4c4"/></svg>
<span class="t" style="left:29.60px;top:467.20px;">Textures</span>
<svg style="left:11.20px;top:440.40px;" width="5.60" height="5.60" viewBox="0 0 10 10"><path d="M1.2 0.6 V9.4 L9.2 5 Z" fill="#626262"/></svg>
<svg style="left:3.60px;top:479.80px;" width="5.60" height="5.60" viewBox="0 0 10 10"><path d="M1.2 0.6 V9.4 L9.2 5 Z" fill="#626262"/></svg>
<svg style="left:10.40px;top:478.20px;" width="8.80" height="8.80" viewBox="0 0 16 16"><path d="M1 2.6 H6.2 L7.6 4.2 H15 V13.2 H1 Z" fill="#c4c4c4"/></svg>
<span class="b" style="left:21.40px;top:477.15px;">Packages</span>
<div style="left:138.10px;top:381.00px;width:36.70px;height:36.60px;background:#414141;box-shadow:0 0.3px 1.6px rgba(0,0,0,0.55);"></div>
<div style="left:184.60px;top:381.00px;width:36.70px;height:36.60px;background:#414141;box-shadow:0 0.3px 1.6px rgba(0,0,0,0.55);"></div>
<div style="left:231.10px;top:381.00px;width:36.70px;height:36.60px;background:#414141;box-shadow:0 0.3px 1.6px rgba(0,0,0,0.55);"></div>
<div style="left:277.60px;top:381.00px;width:36.70px;height:36.60px;background:#414141;box-shadow:0 0.3px 1.6px rgba(0,0,0,0.55);"></div>
<div style="left:324.10px;top:381.00px;width:36.70px;height:36.60px;background:#414141;box-shadow:0 0.3px 1.6px rgba(0,0,0,0.55);"></div>
<div style="left:370.60px;top:381.00px;width:36.70px;height:36.60px;background:#414141;box-shadow:0 0.3px 1.6px rgba(0,0,0,0.55);"></div>
<div style="left:417.10px;top:381.00px;width:36.70px;height:36.60px;background:#414141;box-shadow:0 0.3px 1.6px rgba(0,0,0,0.55);"></div>
<svg style="left:130.00px;top:375.00px;" width="330.00" height="50.00" viewBox="0 0 330 50"><polygon points="11.2,14.7 25.3,11.2 39.4,14.1 31.2,17.6" fill="#525a61"/><polygon points="11.2,14.7 31.2,17.6 30.8,40.6 12.4,35.3" fill="#3c3e40"/><polygon points="31.2,17.6 39.4,14.1 38.2,35.3 30.8,40.6" fill="#3f4143"/><polygon points="57.6,15.3 70.6,11.2 86.5,13.5 77.6,18.8" fill="#8c9194"/><polygon points="57.6,15.3 77.6,18.8 77.1,39.4 59.4,34.7" fill="#707171"/><polygon points="77.6,18.8 86.5,13.5 85.3,34.1 77.1,39.4" fill="#47494b"/><defs><radialGradient id="sp" cx="0.42" cy="0.36" r="0.7"><stop offset="0" stop-color="#4a545c"/><stop offset="0.5" stop-color="#272d32"/><stop offset="0.88" stop-color="#1b1f22"/><stop offset="1" stop-color="#74736f"/></radialGradient></defs><circle cx="166.1" cy="24.1" r="10.8" fill="url(#sp)"/><circle cx="166.1" cy="24.1" r="10.6" fill="none" stroke="#8a8680" stroke-width="0.5" stroke-opacity="0.8"/><circle cx="163.0" cy="20.2" r="1.1" fill="#e8eef2"/><polygon points="203.1,18.2 214.9,19.0 214.9,33.2 203.1,31.8" fill="#5e2a32"/><polygon points="203.1,17.9 208.0,16.2 220.5,16.2 214.9,19.0" fill="#83303b"/><polygon points="214.9,19.0 220.5,16.4 220.9,29.0 214.9,33.0" fill="#41383b"/><polygon points="203.5,18.8 209.0,19.2 209.0,32.2 203.7,31.6" fill="#8c2935"/><polygon points="210.4,19.4 214.7,19.6 214.7,33.0 210.4,32.6" fill="#8c2935"/><polygon points="208.0,11.0 213.2,11.0 213.2,16.9 208.0,16.9" fill="#8c2935"/><polygon points="213.2,11.0 217.0,11.2 217.0,16.2 213.2,16.9" fill="#41383b"/><polygon points="208.0,11.0 209.6,10.4 217.0,10.6 217.0,11.2 213.2,11.2" fill="#83303b"/><polygon points="209.4,32.6 211.4,32.8 211.5,36.0 209.2,36.0" fill="#8c2935"/><polygon points="207.6,36.0 210.0,34.8 213.4,36.6 211.4,38.2" fill="#8c2935"/><polygon points="212.9,35.4 218.6,33.7 219.2,35.0 215.0,38.4" fill="#8c2935"/><polygon points="249.8,18.2 261.6,19.0 261.6,33.2 249.8,31.8" fill="#3a3839"/><polygon points="249.8,17.9 254.7,16.2 267.2,16.2 261.6,19.0" fill="#47424a"/><polygon points="261.6,19.0 267.2,16.4 267.6,29.0 261.6,33.0" fill="#38383b"/><polygon points="250.2,18.8 255.7,19.2 255.7,32.2 250.4,31.6" fill="#5f2a31"/><polygon points="257.1,19.4 261.4,19.6 261.4,33.0 257.1,32.6" fill="#5f2a31"/><polygon points="254.7,11.0 259.9,11.0 259.9,16.9 254.7,16.9" fill="#5f2a31"/><polygon points="259.9,11.0 263.7,11.2 263.7,16.2 259.9,16.9" fill="#38383b"/><polygon points="254.7,11.0 256.3,10.4 263.7,10.6 263.7,11.2 259.9,11.2" fill="#47424a"/><polygon points="256.1,32.6 258.1,32.8 258.2,36.0 255.9,36.0" fill="#5f2a31"/><polygon points="254.3,36.0 256.7,34.8 260.1,36.6 258.1,38.2" fill="#5f2a31"/><polygon points="259.6,35.4 265.3,33.7 265.9,35.0 261.7,38.4" fill="#5f2a31"/><polygon points="293.7,24.2 309.0,24.2 308.6,31.6 305.6,33.6 301.3,34.6 297.0,33.6 294.0,31.6" fill="#2c3135"/><ellipse cx="301.3" cy="24.3" rx="7.7" ry="2" fill="#3a4146"/><polygon points="295.4,15.5 301.0,14.4 307.3,15.5 307.3,22.8 301.4,23.6 296.1,23.1" fill="#31373c"/><polygon points="295.4,15.5 301.0,14.4 307.3,15.5 301.6,16.6" fill="#40474c"/><polygon points="304.5,18.3 319.1,18.3 319.1,22.6 305.9,21.4" fill="#343a3f"/><polygon points="304.5,18.3 319.1,18.3 319.1,19.2 304.7,19.2" fill="#444b50"/></svg>
<svg style="left:144.20px;top:420.05px;" width="7.70" height="7.70" viewBox="0 0 16 16"><path d="M8 0.8 L14.6 4.2 V11.8 L8 15.2 L1.4 11.8 V4.2 Z" fill="#6ec3e8"/><path d="M1.4 4.2 L8 7.8 L14.6 4.2 M8 7.8 V15.2" fill="none" stroke="#2d6f93" stroke-width="1.4"/><path d="M8 0.8 L14.6 4.2 L8 7.8 L1.4 4.2 Z" fill="#9ad8f2"/></svg>
<span class="s" style="left:153.50px;top:418.55px;">Block</span>
<svg style="left:183.40px;top:420.05px;" width="7.70" height="7.70" viewBox="0 0 16 16"><path d="M8 0.8 L14.6 4.2 V11.8 L8 15.2 L1.4 11.8 V4.2 Z" fill="#6ec3e8"/><path d="M1.4 4.2 L8 7.8 L14.6 4.2 M8 7.8 V15.2" fill="none" stroke="#2d6f93" stroke-width="1.4"/><path d="M8 0.8 L14.6 4.2 L8 7.8 L1.4 4.2 Z" fill="#9ad8f2"/></svg>
<span class="s" style="left:192.70px;top:418.55px;">BlockStyle</span>
<svg style="left:231.10px;top:420.05px;" width="7.70" height="7.70" viewBox="0 0 16 16"><path d="M8 0.8 L14.6 4.2 V11.8 L8 15.2 L1.4 11.8 V4.2 Z" fill="#6ec3e8"/><path d="M1.4 4.2 L8 7.8 L14.6 4.2 M8 7.8 V15.2" fill="none" stroke="#2d6f93" stroke-width="1.4"/><path d="M8 0.8 L14.6 4.2 L8 7.8 L1.4 4.2 Z" fill="#9ad8f2"/></svg>
<span class="s" style="left:240.40px;top:418.55px;">Explosion</span>
<svg style="left:278.40px;top:420.05px;" width="7.70" height="7.70" viewBox="0 0 16 16"><path d="M8 0.8 L14.6 4.2 V11.8 L8 15.2 L1.4 11.8 V4.2 Z" fill="#6ec3e8"/><path d="M1.4 4.2 L8 7.8 L14.6 4.2 M8 7.8 V15.2" fill="none" stroke="#2d6f93" stroke-width="1.4"/><path d="M8 0.8 L14.6 4.2 L8 7.8 L1.4 4.2 Z" fill="#9ad8f2"/></svg>
<span class="s" style="left:287.60px;top:418.55px;">Projectile</span>
<svg style="left:329.80px;top:420.05px;" width="7.70" height="7.70" viewBox="0 0 16 16"><path d="M8 0.8 L14.6 4.2 V11.8 L8 15.2 L1.4 11.8 V4.2 Z" fill="#6ec3e8"/><path d="M1.4 4.2 L8 7.8 L14.6 4.2 M8 7.8 V15.2" fill="none" stroke="#2d6f93" stroke-width="1.4"/><path d="M8 0.8 L14.6 4.2 L8 7.8 L1.4 4.2 Z" fill="#9ad8f2"/></svg>
<span class="s" style="left:338.80px;top:418.55px;">Robot</span>
<svg style="left:370.80px;top:420.05px;" width="7.70" height="7.70" viewBox="0 0 16 16"><path d="M8 0.8 L14.6 4.2 V11.8 L8 15.2 L1.4 11.8 V4.2 Z" fill="#6ec3e8"/><path d="M1.4 4.2 L8 7.8 L14.6 4.2 M8 7.8 V15.2" fill="none" stroke="#2d6f93" stroke-width="1.4"/><path d="M8 0.8 L14.6 4.2 L8 7.8 L1.4 4.2 Z" fill="#9ad8f2"/></svg>
<span class="s" style="left:379.40px;top:418.55px;">Robot W...</span>
<svg style="left:423.10px;top:420.05px;" width="7.70" height="7.70" viewBox="0 0 16 16"><path d="M8 0.8 L14.6 4.2 V11.8 L8 15.2 L1.4 11.8 V4.2 Z" fill="#6ec3e8"/><path d="M1.4 4.2 L8 7.8 L14.6 4.2 M8 7.8 V15.2" fill="none" stroke="#2d6f93" stroke-width="1.4"/><path d="M8 0.8 L14.6 4.2 L8 7.8 L1.4 4.2 Z" fill="#9ad8f2"/></svg>
<span class="s" style="left:432.00px;top:418.55px;">Turret</span>
<div style="left:127.50px;top:561.00px;width:498.50px;height:12.60px;background:#303030;"></div>
<div style="left:582.20px;top:567.10px;width:33.80px;height:0.70px;background:#5c5c5c;"></div>
<div style="left:598.80px;top:564.50px;width:6.00px;height:6.00px;background:#a0a0a0;border-radius:3px;"></div>
<div style="left:627.40px;top:17.00px;width:222.60px;height:556.60px;background:#2e2e2e;"></div>
<div style="left:627.40px;top:2.50px;width:66.00px;height:14.50px;background:#303030;border-radius:2.5px 2.5px 0 0;"></div>
<svg style="left:633.20px;top:7.00px;" width="6.60" height="6.60" viewBox="0 0 10 10"><circle cx="5" cy="5" r="4.8" fill="#c4c4c4"/><rect x="4.3" y="4.2" width="1.4" height="3.6" fill="#383838"/><rect x="4.3" y="2" width="1.4" height="1.4" fill="#383838"/></svg>
<span class="t" style="left:642.60px;top:5.05px;">Inspector</span>
<svg style="left:828.80px;top:6.60px;" width="6.20" height="7.00" viewBox="0 0 6.2 7"><rect x="0.7" y="3.4" width="4.9" height="3.1" rx="0.6" fill="none" stroke="#b8b8b8" stroke-width="1.05"/><path d="M1.6 3.3 V2.3 A1.55 1.55 0 0 1 4.7 2.3" fill="none" stroke="#b8b8b8" stroke-width="0.95"/></svg>
<svg style="left:841.80px;top:6.60px;" width="2.00" height="7.20" viewBox="0 0 2 7.2"><g fill="#c4c4c4"><rect x="0.45" y="0.2" width="1.1" height="1.3"/><rect x="0.45" y="2.95" width="1.1" height="1.3"/><rect x="0.45" y="5.7" width="1.1" height="1.3"/></g></svg>
<svg style="left:631.00px;top:23.40px;" width="13.40" height="13.40" viewBox="0 0 16 16"><g fill="none" stroke="#c4c4c4" stroke-width="1.05" stroke-linejoin="round"><path d="M8 1.2 L14.4 4.4 V11.6 L8 14.8 L1.6 11.6 V4.4 Z"/><path d="M1.6 4.4 L8 7.6 L14.4 4.4 M8 7.6 V14.8"/></g></svg>
<svg style="left:643.40px;top:36.30px;" width="4.00" height="2.60" viewBox="0 0 10 6"><path d="M0 0 H10 L5 6 Z" fill="#b4b4b4"/></svg>
<div style="left:656.00px;top:24.20px;width:8.20px;height:8.40px;background:#262626;border-radius:1.5px;border:0.6px solid #1c1c1c;"></div>
<svg style="left:657.00px;top:25.40px;" width="6.40" height="6.00" viewBox="0 0 10 9"><path d="M1.4 5 L4 7.8 L8.8 1.6" fill="none" stroke="#e8e8e8" stroke-width="1.6"/></svg>
<div style="left:668.00px;top:23.20px;width:133.80px;height:10.60px;background:#222222;border-radius:2px;border:0.6px solid #212121;"></div>
<span class="f" style="left:669.80px;top:23.25px;font-size:8.55px;">GameObject</span>
<div style="left:804.20px;top:24.00px;width:8.40px;height:8.40px;background:#262626;border-radius:1.5px;border:0.6px solid #1c1c1c;"></div>
<span class="t" style="left:815.00px;top:23.25px;">Static</span>
<svg style="left:842.60px;top:27.05px;" width="5.00" height="3.10" viewBox="0 0 10 6"><path d="M0 0 H10 L5 6 Z" fill="#b4b4b4"/></svg>
<span class="t" style="left:652.20px;top:37.65px;">Tag</span>
<div style="left:668.00px;top:38.40px;width:77.60px;height:9.60px;background:#414141;border-radius:2px;"></div>
<span class="f" style="left:669.80px;top:37.65px;">Untagged</span>
<svg style="left:738.00px;top:41.65px;" width="5.00" height="3.10" viewBox="0 0 10 6"><path d="M0 0 H10 L5 6 Z" fill="#b4b4b4"/></svg>
<span class="t" style="left:753.60px;top:37.65px;">Layer</span>
<div style="left:778.00px;top:38.40px;width:70.00px;height:9.60px;background:#414141;border-radius:2px;"></div>
<span class="f" style="left:779.80px;top:37.65px;">Default</span>
<svg style="left:840.20px;top:41.65px;" width="5.00" height="3.10" viewBox="0 0 10 6"><path d="M0 0 H10 L5 6 Z" fill="#b4b4b4"/></svg>
<div style="left:627.40px;top:53.20px;width:222.60px;height:0.80px;background:#222222;"></div>
<div style="left:627.40px;top:54.00px;width:222.60px;height:11.80px;background:#343434;"></div>
<svg style="left:630.60px;top:57.30px;" width="6.20" height="6.20" viewBox="0 0 10 10"><path d="M0.6 1.2 H9.4 L5 9.2 Z" fill="#626262"/></svg>
<svg style="left:639.60px;top:55.60px;" width="8.80" height="8.80" viewBox="0 0 12 12"><path d="M6 6 V1.4" stroke="#8fd43c" stroke-width="1.9" stroke-linecap="round"/><path d="M6 6 L1.8 9.4" stroke="#3fa7e0" stroke-width="1.9" stroke-linecap="round"/><path d="M6 6 L10.2 9.4" stroke="#e2553a" stroke-width="1.9" stroke-linecap="round"/></svg>
<span class="b" style="left:664.00px;top:54.75px;">Transform</span>
<svg style="left:815.60px;top:57.00px;" width="6.40" height="6.40" viewBox="0 0 10 10"><circle cx="5" cy="5" r="4.8" fill="#c4c4c4"/><path d="M3.4 3.8 A1.7 1.7 0 1 1 5 5.6 V6.4" fill="none" stroke="#3e3e3e" stroke-width="1.2"/><rect x="4.4" y="7.2" width="1.2" height="1.2" fill="#3e3e3e"/></svg>
<svg style="left:828.00px;top:57.00px;" width="6.40" height="6.40" viewBox="0 0 10 10"><path d="M0.4 2.8 H9.6 M0.4 7.2 H9.6" stroke="#c4c4c4" stroke-width="1.1"/><path d="M6.4 0.8 V4.8 M3.4 5.2 V9.2" stroke="#c4c4c4" stroke-width="1.4"/></svg>
<svg style="left:842.00px;top:56.60px;" width="2.00" height="7.20" viewBox="0 0 2 7.2"><g fill="#c4c4c4"><rect x="0.45" y="0.2" width="1.1" height="1.3"/><rect x="0.45" y="2.95" width="1.1" height="1.3"/><rect x="0.45" y="5.7" width="1.1" height="1.3"/></g></svg>
<span class="t" style="left:638.80px;top:69.45px;">Position</span>
<span class="t" style="left:716.40px;top:69.45px;">X</span>
<div style="left:725.20px;top:69.50px;width:32.40px;height:10.50px;background:#222222;border-radius:2px;border:0.6px solid #212121;"></div>
<span class="f" style="left:727.60px;top:69.45px;">0</span>
<span class="t" style="left:762.20px;top:69.45px;">Y</span>
<div style="left:770.80px;top:69.50px;width:32.40px;height:10.50px;background:#222222;border-radius:2px;border:0.6px solid #212121;"></div>
<span class="f" style="left:773.20px;top:69.45px;">0</span>
<span class="t" style="left:807.00px;top:69.45px;">Z</span>
<div style="left:815.80px;top:69.50px;width:32.60px;height:10.50px;background:#222222;border-radius:2px;border:0.6px solid #212121;"></div>
<span class="f" style="left:818.20px;top:69.45px;">0</span>
<span class="t" style="left:638.80px;top:81.70px;">Rotation</span>
<span class="t" style="left:716.40px;top:81.70px;">X</span>
<div style="left:725.20px;top:81.75px;width:32.40px;height:10.50px;background:#222222;border-radius:2px;border:0.6px solid #212121;"></div>
<span class="f" style="left:727.60px;top:81.70px;">0</span>
<span class="t" style="left:762.20px;top:81.70px;">Y</span>
<div style="left:770.80px;top:81.75px;width:32.40px;height:10.50px;background:#222222;border-radius:2px;border:0.6px solid #212121;"></div>
<span class="f" style="left:773.20px;top:81.70px;">0</span>
<span class="t" style="left:807.00px;top:81.70px;">Z</span>
<div style="left:815.80px;top:81.75px;width:32.60px;height:10.50px;background:#222222;border-radius:2px;border:0.6px solid #212121;"></div>
<span class="f" style="left:818.20px;top:81.70px;">0</span>
<span class="t" style="left:638.80px;top:93.95px;">Scale</span>
<span class="t" style="left:716.40px;top:93.95px;">X</span>
<div style="left:725.20px;top:94.00px;width:32.40px;height:10.50px;background:#222222;border-radius:2px;border:0.6px solid #212121;"></div>
<span class="f" style="left:727.60px;top:93.95px;">1</span>
<span class="t" style="left:762.20px;top:93.95px;">Y</span>
<div style="left:770.80px;top:94.00px;width:32.40px;height:10.50px;background:#222222;border-radius:2px;border:0.6px solid #212121;"></div>
<span class="f" style="left:773.20px;top:93.95px;">1</span>
<span class="t" style="left:807.00px;top:93.95px;">Z</span>
<div style="left:815.80px;top:94.00px;width:32.60px;height:10.50px;background:#222222;border-radius:2px;border:0.6px solid #212121;"></div>
<span class="f" style="left:818.20px;top:93.95px;">1</span>
<svg style="left:702.20px;top:95.60px;" width="9.00" height="7.00" viewBox="0 0 9 7"><ellipse cx="2.5" cy="3.2" rx="1.9" ry="1.9" fill="none" stroke="#a2a2a2" stroke-width="1.15"/><ellipse cx="6.1" cy="3.2" rx="1.9" ry="1.9" fill="none" stroke="#a2a2a2" stroke-width="1.15"/><path d="M4 1.8 L8.2 6.2" stroke="#2e2e2e" stroke-width="1.5"/><path d="M4.6 2.8 L8 6.4" stroke="#a2a2a2" stroke-width="0.8"/></svg>
<div style="left:627.40px;top:110.20px;width:222.60px;height:0.80px;background:#222222;"></div>
<div style="left:627.40px;top:111.00px;width:222.60px;height:12.30px;background:#343434;"></div>
<svg style="left:630.60px;top:114.50px;" width="6.20" height="6.20" viewBox="0 0 10 10"><path d="M0.6 1.2 H9.4 L5 9.2 Z" fill="#626262"/></svg>
<svg style="left:640.20px;top:112.60px;" width="7.80" height="9.20" viewBox="0 0 10 12"><path d="M0.6 0.6 H6.4 L9.4 3.6 V11.4 H0.6 Z" fill="#e8e8e8"/><rect x="2.6" y="4" width="4" height="5.4" fill="#4b8f52"/><path d="M4 5 L3.4 8.4 M5.6 5 L5 8.4" stroke="#cfe8cf" stroke-width="0.5"/></svg>
<div style="left:651.80px;top:113.00px;width:8.20px;height:8.20px;background:#262626;border-radius:1.5px;border:0.6px solid #1c1c1c;"></div>
<svg style="left:652.80px;top:114.20px;" width="6.40" height="6.00" viewBox="0 0 10 9"><path d="M1.4 5 L4 7.8 L8.8 1.6" fill="none" stroke="#e8e8e8" stroke-width="1.6"/></svg>
<span class="b" style="left:663.80px;top:111.85px;">Wall (Script)</span>
<svg style="left:815.60px;top:114.00px;" width="6.40" height="6.40" viewBox="0 0 10 10"><circle cx="5" cy="5" r="4.8" fill="#c4c4c4"/><path d="M3.4 3.8 A1.7 1.7 0 1 1 5 5.6 V6.4" fill="none" stroke="#3e3e3e" stroke-width="1.2"/><rect x="4.4" y="7.2" width="1.2" height="1.2" fill="#3e3e3e"/></svg>
<svg style="left:828.00px;top:114.00px;" width="6.40" height="6.40" viewBox="0 0 10 10"><path d="M0.4 2.8 H9.6 M0.4 7.2 H9.6" stroke="#c4c4c4" stroke-width="1.1"/><path d="M6.4 0.8 V4.8 M3.4 5.2 V9.2" stroke="#c4c4c4" stroke-width="1.4"/></svg>
<svg style="left:842.00px;top:113.60px;" width="2.00" height="7.20" viewBox="0 0 2 7.2"><g fill="#c4c4c4"><rect x="0.45" y="0.2" width="1.1" height="1.3"/><rect x="0.45" y="2.95" width="1.1" height="1.3"/><rect x="0.45" y="5.7" width="1.1" height="1.3"/></g></svg>
<span class="d" style="left:638.80px;top:125.95px;">Script</span>
<div style="left:716.40px;top:126.10px;width:132.60px;height:10.40px;background:#303030;border-radius:2px;border:0.6px solid #242424;"></div>
<span class="t" style="left:638.80px;top:138.25px;">Block</span>
<div style="left:716.40px;top:138.40px;width:132.60px;height:10.40px;background:#222222;border-radius:2px;border:0.6px solid #242424;"></div>
<span class="t" style="left:638.80px;top:150.45px;">Width</span>
<div style="left:716.40px;top:150.60px;width:132.60px;height:10.40px;background:#222222;border-radius:2px;border:0.6px solid #242424;"></div>
<span class="t" style="left:638.80px;top:162.65px;">Height</span>
<div style="left:716.40px;top:162.80px;width:132.60px;height:10.40px;background:#222222;border-radius:2px;border:0.6px solid #242424;"></div>
<svg style="left:719.00px;top:127.80px;" width="5.60" height="7.00" viewBox="0 0 10 12"><path d="M0.6 0.6 H6.4 L9.4 3.6 V11.4 H0.6 Z" fill="#8f8f8f"/><rect x="2.6" y="4" width="4" height="5.4" fill="#3f6a45"/></svg>
<span class="d" style="left:726.20px;top:125.95px;">Wall</span>
<svg style="left:718.60px;top:140.00px;" width="7.20" height="7.20" viewBox="0 0 16 16"><path d="M8 0.8 L14.6 4.2 V11.8 L8 15.2 L1.4 11.8 V4.2 Z" fill="#6ec3e8"/><path d="M1.4 4.2 L8 7.8 L14.6 4.2 M8 7.8 V15.2" fill="none" stroke="#2d6f93" stroke-width="1.4"/><path d="M8 0.8 L14.6 4.2 L8 7.8 L1.4 4.2 Z" fill="#9ad8f2"/></svg>
<span class="f" style="left:726.60px;top:138.25px;">Block</span>
<div style="left:836.40px;top:138.90px;width:12.20px;height:9.40px;background:#2d2d2d;border-radius:0 2px 2px 0;"></div>
<svg style="left:839.20px;top:128.00px;" width="6.60" height="6.60" viewBox="0 0 10 10"><circle cx="5" cy="5" r="4.2" fill="none" stroke="#6a6a6a" stroke-width="1"/><circle cx="5" cy="5" r="1.5" fill="#6a6a6a"/></svg>
<svg style="left:839.20px;top:140.30px;" width="6.60" height="6.60" viewBox="0 0 10 10"><circle cx="5" cy="5" r="4.2" fill="none" stroke="#c4c4c4" stroke-width="1"/><circle cx="5" cy="5" r="1.5" fill="#c4c4c4"/></svg>
<span class="f" style="left:719.00px;top:150.45px;">10</span>
<span class="f" style="left:719.00px;top:162.65px;">4</span>
<div style="left:627.40px;top:177.60px;width:222.60px;height:0.80px;background:#222222;"></div>
<div style="left:669.40px;top:184.60px;width:139.40px;height:12.90px;background:#474747;border-radius:2px;"></div>
<span class="f" style="left:669.4px;top:185.65px;width:139.4px;text-align:center;">Add Component</span>
<div style="left:627.40px;top:553.60px;width:222.60px;height:0.80px;background:#222222;"></div>
<div style="left:627.40px;top:554.40px;width:222.60px;height:14.40px;background:#323232;"></div>
<div style="left:627.40px;top:568.80px;width:222.60px;height:0.80px;background:#222222;"></div>
<span class="b" style="left:629.40px;top:556.35px;">Asset Labels</span>
<div style="left:0.00px;top:573.60px;width:850.00px;height:1.40px;background:#111111;"></div>
<div style="left:0.00px;top:0.00px;width:1.00px;height:575.00px;background:#111111;"></div>
</div></body></html>
